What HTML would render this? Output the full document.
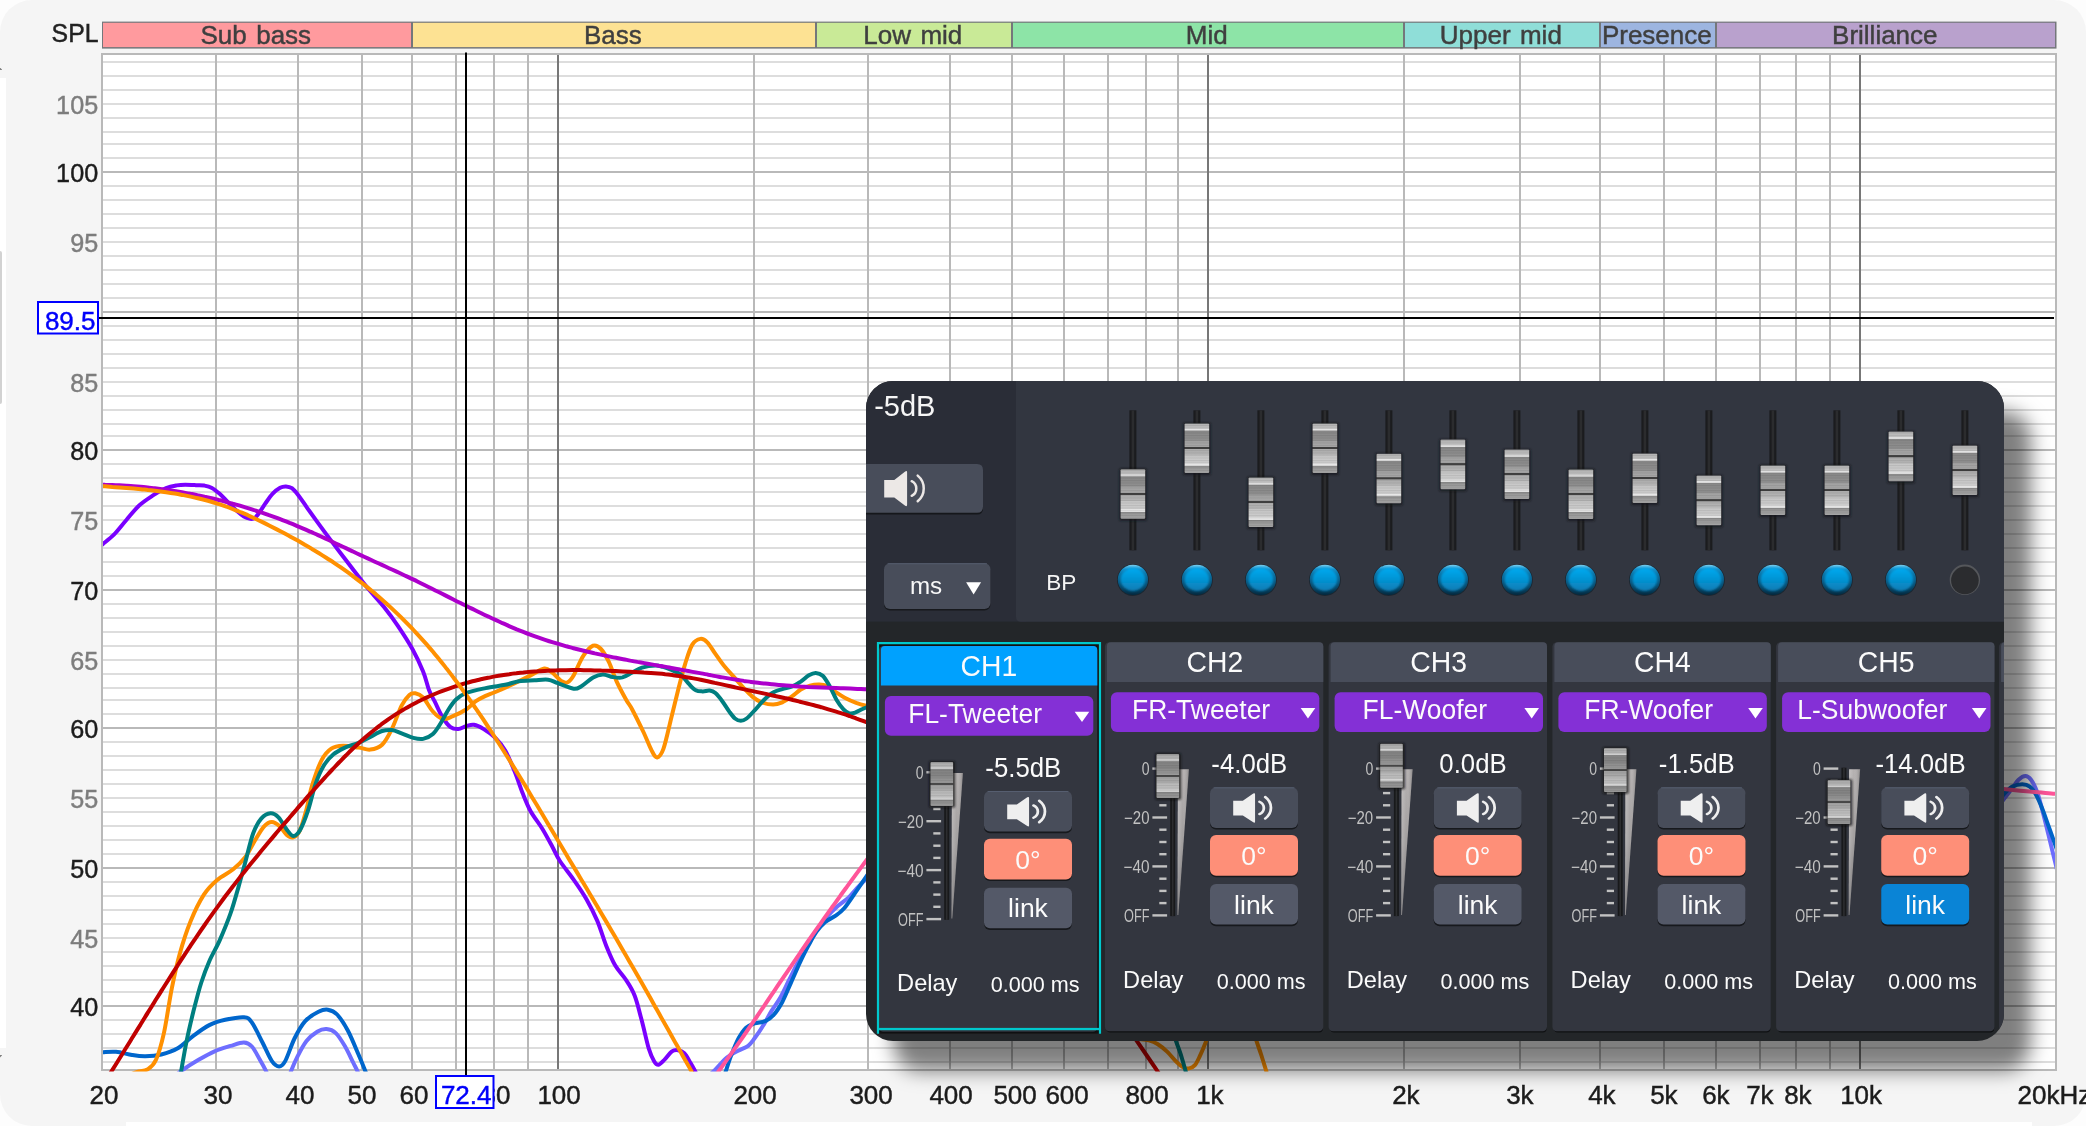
<!DOCTYPE html>
<html><head><meta charset="utf-8"><title>SPL graph</title>
<style>
html,body{margin:0;padding:0}
body{width:2086px;height:1126px;overflow:hidden;position:relative;background:#fdfdfd;font-family:"Liberation Sans", sans-serif}
#win{position:absolute;left:0;top:0;width:2086px;height:1126px;background:#f5f5f5;border-radius:32px 32px 32px 32px}
.wstrip{position:absolute;background:#fff}
</style></head><body>
<div id="win"></div>
<div class="wstrip" style="left:126px;top:1122px;width:1906px;height:4px"></div>
<div class="wstrip" style="left:0;top:78px;width:6px;height:970px"></div>
<div style="position:absolute;left:0;top:251px;width:2px;height:153px;background:#d2d2d2;border-radius:0 2px 2px 0"></div>
<div style="position:absolute;left:0;top:67.5px;width:2.4px;height:2.6px;background:#808080;clip-path:polygon(0 0,100% 100%,0 100%)"></div>
<div style="position:absolute;left:0;top:1055px;width:2.4px;height:2.6px;background:#808080;clip-path:polygon(0 0,100% 0,0 100%)"></div>
<svg id="chart" width="2086" height="1126" viewBox="0 0 2086 1126" style="position:absolute;left:0;top:0;will-change:transform" font-family='"Liberation Sans", sans-serif' font-size="26">
<defs><clipPath id="pc"><rect x="103" y="55" width="1952" height="1016.5"/></clipPath></defs>
<rect x="102" y="54" width="1954" height="1016" fill="#fff"/>
<g fill="#dddddd"><rect x="102" y="1061" width="1954" height="2"/><rect x="102" y="1047" width="1954" height="2"/><rect x="102" y="1033" width="1954" height="2"/><rect x="102" y="1019" width="1954" height="2"/><rect x="102" y="991" width="1954" height="2"/><rect x="102" y="979" width="1954" height="2"/><rect x="102" y="965" width="1954" height="2"/><rect x="102" y="951" width="1954" height="2"/><rect x="102" y="937" width="1954" height="2"/><rect x="102" y="923" width="1954" height="2"/><rect x="102" y="909" width="1954" height="2"/><rect x="102" y="895" width="1954" height="2"/><rect x="102" y="881" width="1954" height="2"/><rect x="102" y="853" width="1954" height="2"/><rect x="102" y="839" width="1954" height="2"/><rect x="102" y="825" width="1954" height="2"/><rect x="102" y="811" width="1954" height="2"/><rect x="102" y="797" width="1954" height="2"/><rect x="102" y="783" width="1954" height="2"/><rect x="102" y="769" width="1954" height="2"/><rect x="102" y="755" width="1954" height="2"/><rect x="102" y="741" width="1954" height="2"/><rect x="102" y="713" width="1954" height="2"/><rect x="102" y="699" width="1954" height="2"/><rect x="102" y="687" width="1954" height="2"/><rect x="102" y="673" width="1954" height="2"/><rect x="102" y="659" width="1954" height="2"/><rect x="102" y="645" width="1954" height="2"/><rect x="102" y="631" width="1954" height="2"/><rect x="102" y="617" width="1954" height="2"/><rect x="102" y="603" width="1954" height="2"/><rect x="102" y="575" width="1954" height="2"/><rect x="102" y="561" width="1954" height="2"/><rect x="102" y="547" width="1954" height="2"/><rect x="102" y="533" width="1954" height="2"/><rect x="102" y="519" width="1954" height="2"/><rect x="102" y="505" width="1954" height="2"/><rect x="102" y="491" width="1954" height="2"/><rect x="102" y="477" width="1954" height="2"/><rect x="102" y="463" width="1954" height="2"/><rect x="102" y="435" width="1954" height="2"/><rect x="102" y="423" width="1954" height="2"/><rect x="102" y="409" width="1954" height="2"/><rect x="102" y="395" width="1954" height="2"/><rect x="102" y="381" width="1954" height="2"/><rect x="102" y="367" width="1954" height="2"/><rect x="102" y="353" width="1954" height="2"/><rect x="102" y="339" width="1954" height="2"/><rect x="102" y="325" width="1954" height="2"/><rect x="102" y="297" width="1954" height="2"/><rect x="102" y="283" width="1954" height="2"/><rect x="102" y="269" width="1954" height="2"/><rect x="102" y="255" width="1954" height="2"/><rect x="102" y="241" width="1954" height="2"/><rect x="102" y="227" width="1954" height="2"/><rect x="102" y="213" width="1954" height="2"/><rect x="102" y="199" width="1954" height="2"/><rect x="102" y="185" width="1954" height="2"/><rect x="102" y="157" width="1954" height="2"/><rect x="102" y="143" width="1954" height="2"/><rect x="102" y="131" width="1954" height="2"/><rect x="102" y="117" width="1954" height="2"/><rect x="102" y="103" width="1954" height="2"/><rect x="102" y="89" width="1954" height="2"/><rect x="102" y="75" width="1954" height="2"/><rect x="102" y="61" width="1954" height="2"/></g>
<g fill="#b9b9b9"><rect x="102" y="1005" width="1954" height="2"/><rect x="102" y="867" width="1954" height="2"/><rect x="102" y="727" width="1954" height="2"/><rect x="102" y="589" width="1954" height="2"/><rect x="102" y="449" width="1954" height="2"/><rect x="102" y="311" width="1954" height="2"/><rect x="102" y="171" width="1954" height="2"/></g>
<g fill="#b9b9b9"><rect x="215" y="54" width="2" height="1016"/><rect x="297" y="54" width="2" height="1016"/><rect x="361" y="54" width="2" height="1016"/><rect x="411" y="54" width="2" height="1016"/><rect x="455" y="54" width="2" height="1016"/><rect x="493" y="54" width="2" height="1016"/><rect x="527" y="54" width="2" height="1016"/><rect x="753" y="54" width="2" height="1016"/><rect x="867" y="54" width="2" height="1016"/><rect x="949" y="54" width="2" height="1016"/><rect x="1011" y="54" width="2" height="1016"/><rect x="1063" y="54" width="2" height="1016"/><rect x="1107" y="54" width="2" height="1016"/><rect x="1145" y="54" width="2" height="1016"/><rect x="1177" y="54" width="2" height="1016"/><rect x="1403" y="54" width="2" height="1016"/><rect x="1519" y="54" width="2" height="1016"/><rect x="1599" y="54" width="2" height="1016"/><rect x="1663" y="54" width="2" height="1016"/><rect x="1715" y="54" width="2" height="1016"/><rect x="1759" y="54" width="2" height="1016"/><rect x="1795" y="54" width="2" height="1016"/><rect x="1829" y="54" width="2" height="1016"/></g>
<g fill="#777777"><rect x="557" y="54" width="2" height="1016"/><rect x="1207" y="54" width="2" height="1016"/><rect x="1859" y="54" width="2" height="1016"/></g>
<rect x="102" y="54" width="1954" height="1016" fill="none" stroke="#b9b9b9" stroke-width="2"/>
<g clip-path="url(#pc)" fill="none" stroke-width="4" stroke-linejoin="round" stroke-linecap="butt">
<path d="M170.0,1080.0C172.1,1078.3 177.8,1073.4 182.6,1070.0C187.4,1066.6 193.3,1062.9 198.6,1059.8C203.9,1056.7 209.3,1053.6 214.6,1051.3C219.9,1049.0 225.7,1047.4 230.6,1045.9C235.5,1044.4 240.3,1042.4 243.9,1042.5C247.5,1042.6 249.2,1043.6 251.9,1046.5C254.6,1049.4 257.6,1055.8 259.9,1059.8C262.2,1063.8 264.0,1067.0 265.7,1070.4C267.4,1073.8 269.3,1078.4 270.0,1080.0" stroke="#6e6eff"/>
<path d="M288.0,1080.0C288.6,1078.4 289.8,1074.2 291.3,1070.4C292.8,1066.6 294.7,1062.0 297.2,1057.1C299.7,1052.2 303.2,1045.3 306.5,1041.1C309.8,1036.9 313.9,1033.8 317.2,1031.8C320.5,1029.8 323.4,1028.9 326.5,1029.1C329.6,1029.3 332.7,1030.2 335.8,1033.1C338.9,1036.0 342.2,1041.6 345.1,1046.5C348.0,1051.4 351.1,1058.4 353.1,1062.4C355.1,1066.4 355.8,1067.5 357.1,1070.4C358.4,1073.3 360.4,1078.4 361.0,1080.0" stroke="#6e6eff"/>
<path d="M704.0,1080.0C705.7,1078.4 710.5,1074.3 714.3,1070.6C718.1,1066.8 723.0,1060.8 726.9,1057.5C730.8,1054.2 734.0,1053.0 737.6,1051.1C741.2,1049.1 745.4,1047.9 748.2,1045.8C751.0,1043.7 752.1,1041.7 754.6,1038.3C757.1,1034.9 760.4,1030.1 763.2,1025.5C766.1,1020.9 768.9,1015.2 771.7,1010.6C774.5,1006.0 777.4,1002.8 780.2,997.8C783.0,992.8 785.9,986.4 788.7,980.7C791.6,975.0 794.1,969.7 797.3,963.7C800.5,957.7 804.7,950.0 807.9,944.5C811.1,939.0 813.3,935.2 816.5,930.6C819.7,926.0 823.6,920.9 827.1,916.8C830.6,912.7 834.2,909.3 837.8,906.1C841.3,902.9 845.2,900.6 848.4,897.6C851.6,894.6 854.0,891.2 857.0,888.0C860.0,884.8 862.8,882.2 866.6,878.4C870.4,874.6 877.8,867.2 880.0,865.0" stroke="#6e6eff"/>
<path d="M1990.0,818.0C1992.3,814.9 2000.4,803.8 2003.9,799.1C2007.4,794.4 2008.6,793.0 2011.1,789.8C2013.5,786.6 2016.2,782.1 2018.6,779.8C2021.0,777.5 2023.3,776.1 2025.4,776.1C2027.5,776.1 2029.0,777.1 2031.0,779.8C2033.0,782.5 2035.3,787.2 2037.2,792.2C2039.1,797.2 2040.3,802.7 2042.2,809.7C2044.1,816.8 2046.4,826.5 2048.4,834.5C2050.4,842.5 2052.2,850.2 2054.0,857.5C2055.8,864.8 2058.2,874.6 2059.0,878.0" stroke="#6e6eff"/>
<path d="M96.0,1052.8C97.1,1052.7 99.4,1052.5 102.7,1052.3C106.0,1052.1 111.1,1051.3 116.0,1051.8C120.9,1052.2 127.1,1054.2 132.0,1055.0C136.9,1055.8 140.4,1056.4 145.3,1056.3C150.2,1056.2 156.0,1055.8 161.3,1054.5C166.6,1053.2 172.0,1051.7 177.3,1048.6C182.6,1045.5 188.0,1039.7 193.3,1035.8C198.6,1031.9 204.0,1027.8 209.3,1025.1C214.6,1022.4 219.4,1021.1 225.2,1019.8C231.0,1018.5 239.4,1016.8 243.9,1017.2C248.4,1017.7 248.8,1018.3 251.9,1022.5C255.0,1026.7 259.2,1036.1 262.5,1042.5C265.8,1048.9 269.1,1057.1 271.9,1061.1C274.7,1065.1 276.9,1066.4 279.1,1066.4C281.3,1066.4 282.6,1065.8 285.2,1061.1C287.8,1056.4 291.2,1045.2 294.5,1038.5C297.8,1031.8 301.2,1025.5 305.2,1021.1C309.2,1016.6 314.7,1013.7 318.5,1011.8C322.3,1009.9 324.7,1009.2 327.8,1009.7C330.9,1010.2 333.8,1011.0 337.1,1014.5C340.4,1018.0 344.2,1023.8 347.8,1030.5C351.4,1037.2 355.6,1047.8 358.5,1054.5C361.4,1061.2 363.4,1066.2 365.1,1070.4C366.9,1074.7 368.4,1078.4 369.0,1080.0" stroke="#0066cc"/>
<path d="M723.0,1080.0C723.5,1078.4 724.6,1074.7 726.0,1070.6C727.4,1066.5 729.1,1060.8 731.2,1055.4C733.3,1050.0 736.1,1042.9 738.6,1038.3C741.1,1033.7 743.4,1030.1 746.1,1027.6C748.8,1025.1 751.4,1024.5 754.6,1023.4C757.8,1022.3 762.1,1022.6 765.3,1021.2C768.5,1019.8 771.0,1018.0 773.8,1014.8C776.6,1011.6 779.4,1007.3 782.3,1002.0C785.1,996.7 788.0,989.3 790.9,982.9C793.8,976.5 796.6,969.8 799.4,963.7C802.2,957.7 805.0,951.9 807.9,946.6C810.8,941.3 813.6,935.8 816.5,931.7C819.4,927.6 821.8,924.8 825.0,922.1C828.2,919.4 832.5,918.0 835.7,915.7C838.9,913.4 841.0,911.9 844.2,908.2C847.4,904.5 851.1,898.6 854.8,893.3C858.5,888.0 862.4,882.2 866.6,876.2C870.8,870.2 877.8,860.2 880.0,857.0" stroke="#0066cc"/>
<path d="M1990.0,812.0C1992.3,809.0 2000.2,798.3 2003.9,794.1C2007.6,789.9 2009.2,788.2 2012.3,786.6C2015.4,785.0 2019.4,784.2 2022.3,784.2C2025.2,784.2 2027.5,784.9 2029.8,786.6C2032.1,788.4 2033.9,791.1 2036.0,794.7C2038.1,798.3 2040.1,803.2 2042.2,808.4C2044.3,813.6 2046.3,820.0 2048.4,825.8C2050.5,831.6 2052.7,837.8 2054.6,843.2C2056.5,848.6 2059.1,855.5 2060.0,858.0" stroke="#0066cc"/>
<path d="M100.0,546.5C100.5,546.1 100.4,546.2 102.7,544.2C105.0,542.2 109.9,538.7 113.9,534.6C117.9,530.5 122.3,524.6 126.6,519.7C130.8,514.8 134.9,509.4 139.4,505.3C143.9,501.2 148.9,498.1 153.3,495.2C157.8,492.3 162.2,489.8 166.1,488.2C170.0,486.6 173.5,486.0 176.7,485.4C179.9,484.8 182.1,484.7 185.3,484.7C188.5,484.7 192.7,485.0 195.9,485.2C199.1,485.4 201.8,485.2 204.5,485.6C207.2,486.1 209.4,486.6 211.9,487.9C214.4,489.2 216.7,491.2 219.4,493.6C222.1,496.0 225.1,499.3 227.9,502.1C230.7,504.9 233.7,508.2 236.4,510.6C239.1,513.0 241.6,515.1 243.9,516.5C246.2,517.9 248.5,518.5 250.3,518.8C252.1,519.1 253.2,519.0 254.6,518.1C256.0,517.2 257.0,515.7 258.8,513.3C260.6,510.9 262.9,507.0 265.2,503.7C267.5,500.4 270.2,496.3 272.7,493.6C275.2,490.9 277.9,488.9 280.1,487.7C282.3,486.5 284.0,486.3 286.0,486.4C288.0,486.5 289.8,486.7 291.9,488.2C293.9,489.7 295.8,492.0 298.3,495.2C300.8,498.4 303.9,503.2 306.8,507.3C309.7,511.4 311.4,513.8 315.6,519.6C319.8,525.4 326.6,534.7 332.2,542.1C337.8,549.5 343.2,556.6 348.9,564.0C354.6,571.4 360.5,579.3 366.4,586.5C372.2,593.7 378.8,600.5 384.0,607.0C389.2,613.5 393.0,618.6 397.7,625.6C402.4,632.6 408.2,641.4 412.4,649.0C416.6,656.6 420.3,664.7 423.1,671.5C425.9,678.3 427.1,685.0 429.0,690.0C430.9,695.0 432.5,697.1 434.8,701.7C437.1,706.3 440.0,713.2 442.6,717.4C445.2,721.6 447.9,725.1 450.5,727.1C453.1,729.1 455.7,729.2 458.3,729.1C460.9,729.0 463.5,726.9 466.1,726.2C468.7,725.5 471.0,724.3 473.9,724.8C476.8,725.3 480.1,726.9 483.7,729.1C487.3,731.3 491.8,734.3 495.4,737.9C499.0,741.5 501.9,744.9 505.2,750.6C508.4,756.3 512.0,764.9 514.9,772.1C517.8,779.3 520.2,787.1 522.8,793.6C525.4,800.1 527.4,805.4 530.6,811.2C533.9,817.1 538.7,822.9 542.3,828.7C545.9,834.6 549.2,840.9 552.1,846.3C555.0,851.7 556.3,855.5 559.9,861.0C563.5,866.5 569.1,873.2 573.6,879.6C578.1,886.0 582.7,892.6 586.6,899.5C590.5,906.4 594.0,913.2 597.3,920.9C600.6,928.6 603.2,938.3 606.2,945.7C609.2,953.1 611.9,959.7 615.1,965.3C618.4,970.9 622.5,974.5 625.7,979.5C629.0,984.5 631.9,988.7 634.6,995.5C637.3,1002.3 639.3,1011.4 641.7,1020.3C644.1,1029.2 646.7,1041.9 648.8,1048.7C650.9,1055.5 652.5,1058.5 654.1,1061.2C655.7,1063.9 656.8,1065.0 658.6,1064.7C660.4,1064.4 662.6,1061.6 664.8,1059.4C667.0,1057.2 669.7,1052.9 671.9,1051.4C674.1,1049.9 676.0,1049.9 678.1,1050.2C680.2,1050.5 682.2,1051.1 684.3,1053.2C686.4,1055.3 688.8,1060.0 690.6,1063.0C692.4,1066.0 693.6,1068.2 695.0,1070.9C696.4,1073.6 698.3,1077.7 699.0,1079.0" stroke="#7a00ff"/>
<path d="M132.0,1074.0C132.9,1073.6 134.6,1072.6 137.3,1071.8C140.0,1071.0 144.9,1071.1 148.0,1069.1C151.1,1067.1 153.3,1065.8 156.0,1059.8C158.7,1053.8 161.2,1045.1 163.9,1033.1C166.6,1021.1 169.2,1001.1 171.9,987.8C174.6,974.5 176.8,964.3 179.9,953.2C183.0,942.1 186.6,931.0 190.6,921.2C194.6,911.4 199.5,901.5 203.9,894.6C208.3,887.7 212.3,884.1 217.2,879.9C222.1,875.7 228.5,873.1 233.2,869.3C237.9,865.5 241.6,862.0 245.2,857.3C248.8,852.6 251.4,846.4 254.5,841.3C257.6,836.2 261.0,829.8 263.9,826.6C266.8,823.4 269.2,822.1 271.9,822.1C274.6,822.1 277.5,824.5 279.9,826.6C282.3,828.7 284.3,832.8 286.5,834.6C288.7,836.4 291.0,838.0 293.2,837.3C295.4,836.6 297.6,835.3 299.8,830.6C302.0,825.9 304.5,816.6 306.5,809.3C308.5,802.0 309.2,795.0 311.7,786.8C314.2,778.6 318.2,766.7 321.5,760.3C324.8,753.9 327.7,751.0 331.3,748.6C334.9,746.2 338.4,745.9 343.0,745.7C347.6,745.5 354.1,747.0 358.6,747.6C363.2,748.2 366.4,750.1 370.3,749.6C374.2,749.1 378.5,748.1 382.1,744.7C385.7,741.3 388.6,735.6 391.8,729.1C395.1,722.6 398.7,711.3 401.6,705.6C404.5,699.9 407.1,697.0 409.4,694.9C411.7,692.8 413.0,692.9 415.3,693.3C417.6,693.7 420.2,694.5 423.1,697.5C426.0,700.5 429.6,707.9 432.9,711.5C436.1,715.1 439.4,718.1 442.6,718.9C445.9,719.7 448.5,718.0 452.4,716.4C456.3,714.8 462.2,712.0 466.1,709.5C470.0,707.0 472.6,703.5 475.9,701.2C479.1,698.9 482.4,697.4 485.6,695.9C488.9,694.4 490.5,694.1 495.4,692.0C500.3,689.9 509.0,686.0 514.9,683.2C520.8,680.4 525.7,677.8 530.6,675.4C535.5,673.0 540.7,669.1 544.3,668.6C547.9,668.1 549.2,670.4 552.1,672.5C555.0,674.6 559.2,679.7 561.8,681.3C564.4,682.9 565.7,683.2 567.7,682.2C569.7,681.2 571.0,679.8 573.6,675.4C576.2,671.0 580.0,660.8 583.3,655.9C586.5,651.0 590.2,646.9 593.1,645.7C596.0,644.6 598.3,646.3 600.9,649.0C603.5,651.7 606.1,656.3 608.7,661.7C611.3,667.1 613.7,674.9 616.6,681.3C619.5,687.7 623.7,695.3 626.3,700.0C628.9,704.7 629.3,704.0 632.2,709.5C635.1,715.0 640.6,726.1 643.9,733.0C647.1,739.9 649.5,746.5 651.7,750.6C653.9,754.7 655.2,757.7 657.2,757.4C659.2,757.1 661.1,755.3 663.5,748.6C665.9,741.9 669.0,727.0 671.5,717.0C674.0,707.0 676.2,697.5 678.5,688.5C680.8,679.5 683.1,670.4 685.4,663.1C687.7,655.8 689.8,648.6 692.3,644.6C694.8,640.6 697.9,639.3 700.4,638.9C702.9,638.5 704.8,639.8 707.3,642.3C709.8,644.8 712.5,649.8 715.4,653.9C718.3,658.0 721.5,662.8 724.6,666.6C727.7,670.4 730.8,673.5 733.9,676.9C737.0,680.3 740.0,684.0 743.1,687.3C746.2,690.6 749.2,694.1 752.3,696.6C755.4,699.1 758.1,701.0 761.6,702.3C765.1,703.6 769.7,704.6 773.1,704.6C776.5,704.6 779.2,703.6 782.3,702.3C785.4,701.0 788.5,698.7 791.6,696.6C794.7,694.5 797.7,691.4 800.8,689.6C803.9,687.8 806.9,686.5 810.0,685.6C813.1,684.7 816.4,684.3 819.3,684.4C822.2,684.5 824.7,685.0 827.4,686.2C830.1,687.5 832.5,690.0 835.4,691.9C838.3,693.8 841.2,695.9 844.7,697.7C848.2,699.5 852.7,701.5 856.2,702.9C859.8,704.2 862.0,704.8 866.0,705.8C870.0,706.8 877.7,708.5 880.0,709.0" stroke="#ff9000"/>
<path d="M1140.0,1039.0C1141.5,1039.2 1146.0,1039.6 1148.9,1040.4C1151.8,1041.2 1154.5,1042.1 1157.5,1044.0C1160.5,1045.9 1163.9,1048.6 1167.1,1051.6C1170.3,1054.6 1174.0,1059.5 1176.7,1062.2C1179.4,1064.9 1181.3,1066.5 1183.4,1067.5C1185.5,1068.5 1187.3,1068.8 1189.2,1068.4C1191.1,1068.0 1193.2,1067.1 1194.9,1065.1C1196.7,1063.1 1198.3,1059.3 1199.7,1056.4C1201.1,1053.5 1202.4,1050.5 1203.5,1047.8C1204.6,1045.1 1205.3,1043.4 1206.4,1040.4C1207.5,1037.4 1209.4,1031.7 1210.0,1030.0" stroke="#ff9000"/>
<path d="M1252.0,1027.0C1252.7,1029.2 1254.8,1035.8 1256.3,1040.4C1257.8,1045.0 1259.5,1049.6 1261.1,1054.5C1262.7,1059.4 1264.6,1065.7 1265.9,1069.9C1267.2,1074.2 1268.5,1078.3 1269.0,1080.0" stroke="#ff9000"/>
<path d="M179.5,1082.0C179.8,1080.1 180.1,1077.2 181.3,1070.4C182.5,1063.6 184.6,1050.9 186.6,1041.1C188.6,1031.3 190.9,1021.6 193.3,1011.8C195.8,1002.0 198.6,990.9 201.3,982.5C204.0,974.1 206.2,968.3 209.3,961.2C212.4,954.1 216.4,947.9 219.9,939.9C223.4,931.9 227.5,922.1 230.6,913.2C233.7,904.3 236.2,895.0 238.6,886.6C241.0,878.2 242.8,871.5 245.2,862.6C247.6,853.7 250.5,840.6 253.2,833.3C255.9,826.0 258.3,821.9 261.2,818.6C264.1,815.3 267.6,813.5 270.5,813.3C273.4,813.1 275.8,814.6 278.5,817.3C281.2,820.0 284.1,826.2 286.5,829.3C288.9,832.4 291.0,835.8 293.2,836.0C295.4,836.2 297.4,834.7 299.8,830.6C302.2,826.5 305.2,819.0 307.8,811.2C310.4,803.4 313.0,791.3 315.6,783.8C318.2,776.3 320.5,771.1 323.4,766.2C326.3,761.3 329.6,757.6 333.2,754.5C336.8,751.4 340.7,749.6 344.9,747.6C349.1,745.6 354.4,744.6 358.6,742.8C362.8,741.0 366.4,738.9 370.3,736.9C374.2,734.9 378.5,732.1 382.1,731.0C385.7,729.9 388.6,729.7 391.8,730.1C395.1,730.5 398.0,732.1 401.6,733.4C405.2,734.7 409.7,737.0 413.3,737.9C416.9,738.8 419.8,739.5 423.1,738.9C426.4,738.2 430.0,736.6 432.9,734.0C435.8,731.4 438.1,727.3 440.7,723.2C443.3,719.1 445.9,713.5 448.5,709.5C451.1,705.5 453.4,702.0 456.3,699.3C459.2,696.5 461.2,694.9 466.1,693.0C471.0,691.1 479.1,689.5 485.6,688.1C492.1,686.7 499.6,685.9 505.2,684.8C510.8,683.7 514.0,682.0 518.9,681.3C523.8,680.5 529.6,680.6 534.5,680.3C539.4,680.0 544.3,679.2 548.2,679.7C552.1,680.2 553.7,681.7 557.9,683.2C562.1,684.7 569.7,688.2 573.6,688.7C577.5,689.2 578.1,688.1 581.4,686.2C584.6,684.3 589.5,679.4 593.1,677.4C596.7,675.4 599.6,674.5 602.9,674.4C606.2,674.3 609.5,676.5 612.7,677.0C616.0,677.5 619.1,678.1 622.4,677.4C625.6,676.6 628.9,674.1 632.2,672.5C635.5,670.9 638.1,668.8 642.0,667.6C645.9,666.5 652.1,665.7 655.6,665.6C659.1,665.5 660.4,666.2 663.0,666.9C665.6,667.6 668.5,668.7 671.5,670.0C674.5,671.3 677.9,672.3 680.8,674.6C683.7,676.9 686.4,681.3 688.9,683.9C691.4,686.5 693.5,689.0 695.8,690.2C698.1,691.5 700.4,691.3 702.7,691.4C705.0,691.5 707.5,690.3 709.6,690.6C711.7,690.9 713.3,691.3 715.4,693.1C717.5,694.9 720.0,698.1 722.3,701.2C724.6,704.3 727.2,708.7 729.3,711.6C731.4,714.5 733.1,717.0 735.0,718.5C736.9,720.0 738.9,720.8 740.8,720.8C742.7,720.8 744.3,720.2 746.6,718.5C748.9,716.8 751.7,713.5 754.6,710.4C757.5,707.3 760.8,703.0 763.9,700.0C767.0,697.0 770.0,694.3 773.1,692.5C776.2,690.7 779.0,690.1 782.3,689.1C785.6,688.1 789.6,687.5 792.7,686.2C795.8,685.0 798.1,683.4 800.8,681.6C803.5,679.8 806.4,676.7 808.9,675.2C811.4,673.8 813.5,672.8 815.8,672.9C818.1,673.0 820.4,673.6 822.7,675.8C825.0,678.0 827.4,682.2 829.7,686.2C832.0,690.2 834.3,696.1 836.6,700.0C838.9,703.9 841.4,707.1 843.5,709.3C845.6,711.5 847.4,712.7 849.3,713.3C851.2,713.9 853.2,713.3 855.1,712.7C857.0,712.1 859.0,710.7 860.8,709.8C862.6,708.9 862.8,708.8 866.0,707.5C869.2,706.2 877.7,702.9 880.0,702.0" stroke="#007f80"/>
<path d="M1171.0,1027.0C1171.8,1029.2 1174.1,1036.0 1175.7,1040.4C1177.3,1044.8 1178.9,1048.7 1180.5,1053.6C1182.1,1058.5 1184.0,1065.5 1185.3,1069.9C1186.5,1074.3 1187.5,1078.3 1188.0,1080.0" stroke="#007f80"/>
<path d="M105.0,1081.8C106.2,1079.9 109.7,1074.2 112.1,1070.4C114.5,1066.6 116.8,1062.8 119.2,1059.0C121.5,1055.2 123.9,1051.4 126.3,1047.5C128.6,1043.7 131.0,1039.9 133.4,1036.0C135.7,1032.2 138.1,1028.4 140.5,1024.6C142.8,1020.7 145.2,1016.9 147.5,1013.1C149.9,1009.3 152.3,1005.5 154.6,1001.7C157.0,997.9 159.4,994.2 161.7,990.4C164.1,986.6 166.5,982.9 168.8,979.2C171.2,975.5 173.5,971.8 175.9,968.1C178.3,964.4 180.6,960.8 183.0,957.2C185.4,953.5 187.7,950.0 190.1,946.4C192.5,942.8 194.8,939.3 197.2,935.8C199.5,932.4 201.9,928.9 204.3,925.5C206.6,922.1 209.0,918.7 211.4,915.4C213.7,912.1 216.1,908.8 218.5,905.6C220.8,902.4 223.2,899.2 225.5,896.0C227.9,892.9 230.3,889.8 232.6,886.7C235.0,883.7 237.4,880.6 239.7,877.6C242.1,874.6 244.5,871.7 246.8,868.7C249.2,865.8 251.5,862.9 253.9,860.0C256.3,857.1 258.6,854.2 261.0,851.3C263.4,848.5 265.7,845.7 268.1,842.8C270.5,840.0 272.8,837.2 275.2,834.4C277.5,831.6 279.9,828.8 282.3,826.0C284.6,823.3 287.0,820.5 289.4,817.8C291.7,815.0 294.1,812.3 296.5,809.6C298.8,806.8 301.2,804.1 303.5,801.5C305.9,798.8 308.3,796.1 310.6,793.4C313.0,790.8 315.4,788.1 317.7,785.5C320.1,782.9 322.5,780.3 324.8,777.7C327.2,775.1 329.5,772.5 331.9,770.0C334.3,767.5 336.6,765.0 339.0,762.5C341.4,760.1 343.7,757.6 346.1,755.3C348.5,752.9 350.8,750.6 353.2,748.3C355.5,746.1 357.9,743.9 360.3,741.7C362.6,739.6 365.0,737.5 367.4,735.5C369.7,733.5 372.1,731.6 374.5,729.7C376.8,727.8 379.2,726.0 381.5,724.2C383.9,722.5 386.3,720.8 388.6,719.1C391.0,717.5 393.4,715.9 395.7,714.4C398.1,712.9 400.5,711.4 402.8,710.0C405.2,708.6 407.5,707.2 409.9,705.9C412.3,704.6 414.6,703.4 417.0,702.2C419.4,701.0 421.7,699.8 424.1,698.7C426.5,697.6 428.8,696.5 431.2,695.5C433.5,694.5 435.9,693.5 438.3,692.5C440.6,691.6 443.0,690.7 445.4,689.8C447.7,688.9 450.1,688.1 452.5,687.3C454.8,686.5 457.2,685.8 459.5,685.0C461.9,684.3 464.3,683.6 466.6,682.9C469.0,682.3 471.4,681.6 473.7,681.0C476.1,680.4 478.5,679.9 480.8,679.3C483.2,678.8 485.5,678.3 487.9,677.8C490.3,677.3 492.6,676.9 495.0,676.4C497.4,676.0 499.7,675.6 502.1,675.2C504.5,674.9 506.8,674.5 509.2,674.2C511.5,673.8 513.9,673.5 516.3,673.3C518.6,673.0 521.0,672.7 523.4,672.5C525.7,672.2 528.1,672.0 530.5,671.8C532.8,671.6 535.2,671.4 537.5,671.3C539.9,671.1 542.3,671.0 544.6,670.9C547.0,670.7 549.4,670.6 551.7,670.5C554.1,670.4 556.5,670.4 558.8,670.3C561.2,670.2 563.5,670.2 565.9,670.2C568.3,670.1 570.6,670.1 573.0,670.1C575.4,670.1 577.7,670.1 580.1,670.1C582.5,670.1 584.8,670.2 587.2,670.2C589.5,670.3 591.9,670.3 594.3,670.4C596.6,670.4 599.0,670.5 601.4,670.6C603.7,670.6 606.1,670.7 608.5,670.8C610.8,670.9 613.2,671.0 615.5,671.1C617.9,671.2 620.3,671.3 622.6,671.4C625.0,671.5 627.4,671.6 629.7,671.7C632.1,671.8 634.5,671.9 636.8,672.1C639.2,672.2 641.5,672.3 643.9,672.5C646.3,672.6 648.6,672.8 651.0,673.0C653.4,673.2 655.7,673.4 658.1,673.6C660.5,673.8 662.8,674.0 665.2,674.3C667.5,674.5 669.9,674.8 672.3,675.1C674.6,675.4 677.0,675.7 679.4,676.1C681.7,676.4 684.1,676.8 686.5,677.2C688.8,677.6 691.2,678.0 693.5,678.4C695.9,678.9 698.3,679.4 700.6,679.8C703.0,680.3 705.4,680.8 707.7,681.3C710.1,681.8 712.5,682.3 714.8,682.9C717.2,683.4 719.5,683.9 721.9,684.4C724.3,685.0 726.6,685.5 729.0,686.0C731.4,686.5 733.7,687.1 736.1,687.6C738.5,688.1 740.8,688.6 743.2,689.1C745.5,689.6 747.9,690.1 750.3,690.6C752.6,691.1 755.0,691.6 757.4,692.1C759.7,692.6 762.1,693.1 764.5,693.6C766.8,694.1 769.2,694.7 771.5,695.2C773.9,695.7 776.3,696.2 778.6,696.7C781.0,697.3 783.4,697.8 785.7,698.3C788.1,698.9 790.5,699.4 792.8,700.0C795.2,700.5 797.5,701.1 799.9,701.7C802.3,702.3 804.6,702.9 807.0,703.5C809.4,704.1 811.7,704.7 814.1,705.3C816.5,705.9 818.8,706.6 821.2,707.2C823.5,707.9 825.9,708.6 828.3,709.3C830.6,710.0 833.0,710.7 835.4,711.4C837.7,712.1 840.1,712.9 842.5,713.7C844.8,714.4 847.2,715.2 849.5,716.0C851.9,716.9 854.3,717.7 856.6,718.6C859.0,719.4 861.4,720.3 863.7,721.2C866.1,722.1 868.5,723.1 870.8,724.1C873.2,725.0 875.5,726.0 877.9,727.0C880.3,728.1 883.8,729.7 885.0,730.2" stroke="#c00000"/>
<path d="M1128.0,1028.0C1129.4,1030.1 1131.6,1033.4 1136.4,1040.4C1141.2,1047.4 1152.0,1063.1 1156.6,1069.9C1161.2,1076.7 1162.8,1079.2 1164.0,1081.0" stroke="#c00000"/>
<path d="M711.0,1081.7C712.3,1079.9 716.0,1074.8 718.6,1071.3C721.1,1067.9 723.6,1064.3 726.1,1060.8C728.7,1057.3 731.2,1053.7 733.7,1050.1C736.2,1046.5 738.7,1042.9 741.3,1039.3C743.8,1035.7 746.3,1032.0 748.8,1028.3C751.3,1024.6 753.9,1021.0 756.4,1017.3C758.9,1013.6 761.4,1009.8 764.0,1006.1C766.5,1002.4 769.0,998.7 771.5,994.9C774.0,991.2 776.6,987.5 779.1,983.7C781.6,980.0 784.1,976.3 786.7,972.6C789.2,968.9 791.7,965.2 794.2,961.5C796.7,957.8 799.3,954.1 801.8,950.5C804.3,946.8 806.8,943.1 809.3,939.5C811.9,935.9 814.4,932.3 816.9,928.7C819.4,925.1 822.0,921.5 824.5,917.9C827.0,914.4 829.5,910.8 832.0,907.3C834.6,903.8 837.1,900.3 839.6,896.8C842.1,893.3 844.7,889.8 847.2,886.4C849.7,882.9 852.2,879.5 854.7,876.1C857.3,872.7 859.8,869.3 862.3,865.9C864.8,862.5 867.3,859.2 869.9,855.8C872.4,852.5 874.9,849.2 877.4,845.9C880.0,842.6 883.7,837.7 885.0,836.0" stroke="#ff5599"/>
<path d="M1985.0,787.2C1988.2,787.5 1996.4,788.4 2003.9,789.1C2011.4,789.8 2021.3,790.8 2029.8,791.6C2038.2,792.4 2049.2,793.2 2054.6,793.7C2060.0,794.2 2060.8,794.2 2062.0,794.3" stroke="#ff5599"/>
<path d="M98.0,484.7C99.2,484.7 102.7,484.7 105.1,484.8C107.5,484.8 109.8,484.9 112.2,485.0C114.6,485.1 116.9,485.2 119.3,485.3C121.7,485.4 124.0,485.6 126.4,485.7C128.8,485.9 131.1,486.1 133.5,486.2C135.9,486.4 138.2,486.6 140.6,486.8C142.9,487.1 145.3,487.3 147.7,487.5C150.0,487.8 152.4,488.0 154.8,488.3C157.1,488.6 159.5,488.9 161.9,489.2C164.2,489.5 166.6,489.9 169.0,490.2C171.3,490.5 173.7,490.9 176.1,491.3C178.4,491.7 180.8,492.1 183.2,492.5C185.5,492.9 187.9,493.3 190.3,493.8C192.6,494.2 195.0,494.7 197.4,495.2C199.7,495.6 202.1,496.1 204.5,496.7C206.8,497.2 209.2,497.7 211.6,498.2C213.9,498.8 216.3,499.4 218.7,500.0C221.0,500.5 223.4,501.1 225.8,501.8C228.1,502.4 230.5,503.0 232.8,503.7C235.2,504.3 237.6,505.0 239.9,505.7C242.3,506.4 244.7,507.1 247.0,507.8C249.4,508.5 251.8,509.3 254.1,510.1C256.5,510.8 258.9,511.6 261.2,512.4C263.6,513.2 266.0,514.0 268.3,514.9C270.7,515.7 273.1,516.5 275.4,517.4C277.8,518.3 280.2,519.2 282.5,520.1C284.9,521.0 287.3,521.9 289.6,522.9C292.0,523.8 294.4,524.8 296.7,525.8C299.1,526.8 301.5,527.8 303.8,528.8C306.2,529.8 308.6,530.9 310.9,531.9C313.3,533.0 315.7,534.0 318.0,535.1C320.4,536.2 322.7,537.3 325.1,538.4C327.5,539.5 329.8,540.6 332.2,541.7C334.6,542.8 336.9,543.9 339.3,545.1C341.7,546.2 344.0,547.3 346.4,548.4C348.8,549.5 351.1,550.7 353.5,551.8C355.9,552.9 358.2,554.0 360.6,555.1C363.0,556.2 365.3,557.3 367.7,558.4C370.1,559.5 372.4,560.6 374.8,561.7C377.2,562.8 379.5,563.8 381.9,564.9C384.3,566.0 386.6,567.1 389.0,568.2C391.4,569.3 393.7,570.3 396.1,571.4C398.5,572.5 400.8,573.6 403.2,574.7C405.6,575.8 407.9,577.0 410.3,578.1C412.6,579.2 415.0,580.3 417.4,581.5C419.7,582.6 422.1,583.8 424.5,585.0C426.8,586.1 429.2,587.3 431.6,588.5C433.9,589.7 436.3,590.9 438.7,592.0C441.0,593.2 443.4,594.4 445.8,595.6C448.1,596.8 450.5,598.0 452.9,599.2C455.2,600.4 457.6,601.6 460.0,602.7C462.3,603.9 464.7,605.1 467.1,606.3C469.4,607.5 471.8,608.6 474.2,609.8C476.5,611.0 478.9,612.1 481.3,613.2C483.6,614.4 486.0,615.5 488.4,616.6C490.7,617.8 493.1,618.9 495.5,619.9C497.8,621.0 500.2,622.1 502.5,623.2C504.9,624.2 507.3,625.3 509.6,626.3C512.0,627.3 514.4,628.3 516.7,629.3C519.1,630.2 521.5,631.2 523.8,632.1C526.2,633.1 528.6,634.0 530.9,634.8C533.3,635.7 535.7,636.6 538.0,637.4C540.4,638.2 542.8,639.0 545.1,639.8C547.5,640.6 549.9,641.4 552.2,642.1C554.6,642.8 557.0,643.5 559.3,644.2C561.7,644.9 564.1,645.6 566.4,646.3C568.8,646.9 571.2,647.6 573.5,648.2C575.9,648.8 578.3,649.4 580.6,650.0C583.0,650.6 585.4,651.2 587.7,651.7C590.1,652.3 592.4,652.8 594.8,653.4C597.2,653.9 599.5,654.4 601.9,654.9C604.3,655.4 606.6,655.9 609.0,656.4C611.4,656.9 613.7,657.4 616.1,657.8C618.5,658.3 620.8,658.8 623.2,659.2C625.6,659.7 627.9,660.1 630.3,660.6C632.7,661.0 635.0,661.4 637.4,661.9C639.8,662.3 642.1,662.7 644.5,663.1C646.9,663.6 649.2,664.0 651.6,664.4C654.0,664.8 656.3,665.2 658.7,665.7C661.1,666.1 663.4,666.5 665.8,666.9C668.2,667.3 670.5,667.8 672.9,668.2C675.3,668.6 677.6,669.0 680.0,669.5C682.3,669.9 684.7,670.3 687.1,670.8C689.4,671.2 691.8,671.7 694.2,672.1C696.5,672.6 698.9,673.0 701.3,673.4C703.6,673.9 706.0,674.3 708.4,674.8C710.7,675.2 713.1,675.7 715.5,676.1C717.8,676.5 720.2,677.0 722.6,677.4C724.9,677.8 727.3,678.2 729.7,678.6C732.0,679.0 734.4,679.4 736.8,679.8C739.1,680.2 741.5,680.5 743.9,680.9C746.2,681.2 748.6,681.6 751.0,681.9C753.3,682.2 755.7,682.5 758.1,682.8C760.4,683.1 762.8,683.4 765.2,683.6C767.5,683.9 769.9,684.1 772.2,684.3C774.6,684.6 777.0,684.8 779.3,685.0C781.7,685.2 784.1,685.4 786.4,685.5C788.8,685.7 791.2,685.9 793.5,686.0C795.9,686.2 798.3,686.3 800.6,686.5C803.0,686.6 805.4,686.7 807.7,686.9C810.1,687.0 812.5,687.1 814.8,687.2C817.2,687.3 819.6,687.4 821.9,687.5C824.3,687.6 826.7,687.7 829.0,687.8C831.4,687.9 833.8,688.0 836.1,688.1C838.5,688.2 840.9,688.3 843.2,688.3C845.6,688.4 848.0,688.5 850.3,688.6C852.7,688.7 855.1,688.8 857.4,688.9C859.8,689.0 862.1,689.1 864.5,689.2C866.9,689.3 869.2,689.4 871.6,689.5C874.0,689.6 876.3,689.7 878.7,689.8C881.1,689.9 883.4,690.1 885.8,690.2C888.2,690.3 890.5,690.5 892.9,690.6C895.3,690.8 898.8,691.0 900.0,691.1" stroke="#ad00cc"/>
<path d="M98.0,485.8C99.2,485.9 102.8,486.1 105.1,486.3C107.5,486.5 109.9,486.7 112.3,486.9C114.6,487.0 117.0,487.2 119.4,487.4C121.8,487.6 124.1,487.8 126.5,488.0C128.9,488.2 131.3,488.4 133.7,488.6C136.0,488.8 138.4,489.0 140.8,489.2C143.2,489.5 145.5,489.7 147.9,490.0C150.3,490.2 152.7,490.5 155.0,490.8C157.4,491.1 159.8,491.4 162.2,491.7C164.6,492.0 166.9,492.3 169.3,492.7C171.7,493.1 174.1,493.4 176.4,493.8C178.8,494.2 181.2,494.7 183.6,495.1C185.9,495.6 188.3,496.1 190.7,496.6C193.1,497.1 195.5,497.6 197.8,498.2C200.2,498.8 202.6,499.4 205.0,500.0C207.3,500.6 209.7,501.3 212.1,502.0C214.5,502.7 216.8,503.5 219.2,504.2C221.6,505.0 224.0,505.8 226.4,506.7C228.7,507.5 231.1,508.4 233.5,509.3C235.9,510.2 238.2,511.2 240.6,512.2C243.0,513.1 245.4,514.2 247.8,515.2C250.1,516.3 252.5,517.4 254.9,518.5C257.3,519.6 259.6,520.7 262.0,521.9C264.4,523.1 266.8,524.3 269.1,525.5C271.5,526.7 273.9,527.9 276.3,529.1C278.7,530.3 281.0,531.6 283.4,532.8C285.8,534.1 288.2,535.4 290.5,536.7C292.9,538.0 295.3,539.3 297.7,540.6C300.0,541.9 302.4,543.3 304.8,544.7C307.2,546.0 309.6,547.4 311.9,548.9C314.3,550.3 316.7,551.7 319.1,553.2C321.4,554.7 323.8,556.2 326.2,557.7C328.6,559.2 330.9,560.8 333.3,562.3C335.7,563.9 338.1,565.5 340.5,567.2C342.8,568.8 345.2,570.5 347.6,572.2C350.0,573.9 352.3,575.7 354.7,577.5C357.1,579.2 359.5,581.1 361.8,582.9C364.2,584.8 366.6,586.7 369.0,588.6C371.4,590.5 373.7,592.5 376.1,594.5C378.5,596.5 380.9,598.6 383.2,600.7C385.6,602.8 388.0,604.9 390.4,607.1C392.7,609.3 395.1,611.6 397.5,613.9C399.9,616.1 402.3,618.5 404.6,620.9C407.0,623.3 409.4,625.7 411.8,628.2C414.1,630.7 416.5,633.2 418.9,635.8C421.3,638.4 423.6,641.0 426.0,643.7C428.4,646.5 430.8,649.2 433.2,652.0C435.5,654.9 437.9,657.7 440.3,660.7C442.7,663.6 445.0,666.6 447.4,669.6C449.8,672.7 452.2,675.8 454.5,679.0C456.9,682.1 459.3,685.3 461.7,688.6C464.1,691.9 466.4,695.2 468.8,698.5C471.2,701.9 473.6,705.3 475.9,708.7C478.3,712.2 480.7,715.7 483.1,719.2C485.4,722.8 487.8,726.4 490.2,730.0C492.6,733.6 495.0,737.3 497.3,741.0C499.7,744.7 502.1,748.4 504.5,752.2C506.8,755.9 509.2,759.7 511.6,763.6C514.0,767.4 516.3,771.3 518.7,775.1C521.1,779.0 523.5,782.9 525.9,786.8C528.2,790.8 530.6,794.7 533.0,798.7C535.4,802.6 537.7,806.6 540.1,810.5C542.5,814.5 544.9,818.5 547.2,822.5C549.6,826.5 552.0,830.5 554.4,834.5C556.8,838.5 559.1,842.4 561.5,846.4C563.9,850.4 566.3,854.4 568.6,858.4C571.0,862.4 573.4,866.4 575.8,870.4C578.2,874.3 580.5,878.3 582.9,882.3C585.3,886.3 587.7,890.3 590.0,894.3C592.4,898.3 594.8,902.3 597.2,906.3C599.5,910.4 601.9,914.4 604.3,918.4C606.7,922.4 609.1,926.5 611.4,930.5C613.8,934.6 616.2,938.6 618.6,942.7C620.9,946.8 623.3,950.9 625.7,955.0C628.1,959.1 630.4,963.2 632.8,967.3C635.2,971.5 637.6,975.6 640.0,979.8C642.3,983.9 644.7,988.1 647.1,992.3C649.5,996.5 651.8,1000.7 654.2,1004.9C656.6,1009.2 659.0,1013.4 661.3,1017.6C663.7,1021.9 666.1,1026.1 668.5,1030.3C670.9,1034.6 673.2,1038.8 675.6,1043.1C678.0,1047.3 680.4,1051.5 682.7,1055.7C685.1,1060.0 687.5,1064.2 689.9,1068.4C692.2,1072.6 695.8,1078.9 697.0,1081.0" stroke="#ff9000"/>
</g>
<rect x="465" y="52.5" width="2" height="1023" fill="#000"/>
<rect x="98" y="317" width="1956" height="2" fill="#000"/>
<rect x="102" y="21.6" width="1954.5" height="27" fill="#74777b"/>
<rect x="103" y="22.8" width="308" height="24.3" fill="#ff9a9e"/>
<text x="255.8" y="44.3" text-anchor="middle" fill="#3f3f3f" word-spacing="2.2" stroke="#3f3f3f" stroke-width=".45">Sub bass</text>
<rect x="413" y="22.8" width="402" height="24.3" fill="#fde293"/>
<text x="612.8" y="44.3" text-anchor="middle" fill="#3f3f3f" word-spacing="2.2" stroke="#3f3f3f" stroke-width=".45">Bass</text>
<rect x="817" y="22.8" width="194" height="24.3" fill="#c9ea97"/>
<text x="912.8" y="44.3" text-anchor="middle" fill="#3f3f3f" word-spacing="2.2" stroke="#3f3f3f" stroke-width=".45">Low mid</text>
<rect x="1013" y="22.8" width="390" height="24.3" fill="#8de4a7"/>
<text x="1206.8" y="44.3" text-anchor="middle" fill="#3f3f3f" word-spacing="2.2" stroke="#3f3f3f" stroke-width=".45">Mid</text>
<rect x="1405" y="22.8" width="194" height="24.3" fill="#8fded8"/>
<text x="1500.8" y="44.3" text-anchor="middle" fill="#3f3f3f" word-spacing="2.2" stroke="#3f3f3f" stroke-width=".45">Upper mid</text>
<rect x="1601" y="22.8" width="114" height="24.3" fill="#9db5e0"/>
<text x="1656.8" y="44.3" text-anchor="middle" fill="#3f3f3f" word-spacing="2.2" stroke="#3f3f3f" stroke-width=".45">Presence</text>
<rect x="1717" y="22.8" width="338" height="24.3" fill="#b9a1cd"/>
<text x="1884.8" y="44.3" text-anchor="middle" fill="#3f3f3f" word-spacing="2.2" stroke="#3f3f3f" stroke-width=".45">Brilliance</text>
<text transform="translate(98.5,42) scale(.955,1)" text-anchor="end" fill="#222" stroke="#222" stroke-width=".45">SPL</text>
<text transform="translate(98.2,1015.6) scale(.97,1)" text-anchor="end" fill="#1c1c1c" stroke="#1c1c1c" stroke-width=".45">40</text>
<text transform="translate(98.2,947.6) scale(.97,1)" text-anchor="end" fill="#7d7d7d" stroke="#7d7d7d" stroke-width=".45">45</text>
<text transform="translate(98.2,877.6) scale(.97,1)" text-anchor="end" fill="#1c1c1c" stroke="#1c1c1c" stroke-width=".45">50</text>
<text transform="translate(98.2,807.6) scale(.97,1)" text-anchor="end" fill="#7d7d7d" stroke="#7d7d7d" stroke-width=".45">55</text>
<text transform="translate(98.2,737.6) scale(.97,1)" text-anchor="end" fill="#1c1c1c" stroke="#1c1c1c" stroke-width=".45">60</text>
<text transform="translate(98.2,669.6) scale(.97,1)" text-anchor="end" fill="#7d7d7d" stroke="#7d7d7d" stroke-width=".45">65</text>
<text transform="translate(98.2,599.6) scale(.97,1)" text-anchor="end" fill="#1c1c1c" stroke="#1c1c1c" stroke-width=".45">70</text>
<text transform="translate(98.2,529.6) scale(.97,1)" text-anchor="end" fill="#7d7d7d" stroke="#7d7d7d" stroke-width=".45">75</text>
<text transform="translate(98.2,459.6) scale(.97,1)" text-anchor="end" fill="#1c1c1c" stroke="#1c1c1c" stroke-width=".45">80</text>
<text transform="translate(98.2,391.6) scale(.97,1)" text-anchor="end" fill="#7d7d7d" stroke="#7d7d7d" stroke-width=".45">85</text>
<text transform="translate(98.2,251.6) scale(.97,1)" text-anchor="end" fill="#7d7d7d" stroke="#7d7d7d" stroke-width=".45">95</text>
<text transform="translate(98.2,181.6) scale(.97,1)" text-anchor="end" fill="#1c1c1c" stroke="#1c1c1c" stroke-width=".45">100</text>
<text transform="translate(98.2,113.6) scale(.97,1)" text-anchor="end" fill="#7d7d7d" stroke="#7d7d7d" stroke-width=".45">105</text>
<text x="103.9" y="1104" text-anchor="middle" fill="#1c1c1c" stroke="#1c1c1c" stroke-width=".45">20</text>
<text x="217.9" y="1104" text-anchor="middle" fill="#1c1c1c" stroke="#1c1c1c" stroke-width=".45">30</text>
<text x="299.9" y="1104" text-anchor="middle" fill="#1c1c1c" stroke="#1c1c1c" stroke-width=".45">40</text>
<text x="361.9" y="1104" text-anchor="middle" fill="#1c1c1c" stroke="#1c1c1c" stroke-width=".45">50</text>
<text x="413.9" y="1104" text-anchor="middle" fill="#1c1c1c" stroke="#1c1c1c" stroke-width=".45">60</text>
<text x="495.9" y="1104" text-anchor="middle" fill="#1c1c1c" stroke="#1c1c1c" stroke-width=".45">80</text>
<text x="559.1" y="1104" text-anchor="middle" fill="#1c1c1c" stroke="#1c1c1c" stroke-width=".45">100</text>
<text x="755.1" y="1104" text-anchor="middle" fill="#1c1c1c" stroke="#1c1c1c" stroke-width=".45">200</text>
<text x="871.1" y="1104" text-anchor="middle" fill="#1c1c1c" stroke="#1c1c1c" stroke-width=".45">300</text>
<text x="951.1" y="1104" text-anchor="middle" fill="#1c1c1c" stroke="#1c1c1c" stroke-width=".45">400</text>
<text x="1015.1" y="1104" text-anchor="middle" fill="#1c1c1c" stroke="#1c1c1c" stroke-width=".45">500</text>
<text x="1067.1000000000001" y="1104" text-anchor="middle" fill="#1c1c1c" stroke="#1c1c1c" stroke-width=".45">600</text>
<text x="1147.1000000000001" y="1104" text-anchor="middle" fill="#1c1c1c" stroke="#1c1c1c" stroke-width=".45">800</text>
<text x="1209.9" y="1104" text-anchor="middle" fill="#1c1c1c" stroke="#1c1c1c" stroke-width=".45">1k</text>
<text x="1405.9" y="1104" text-anchor="middle" fill="#1c1c1c" stroke="#1c1c1c" stroke-width=".45">2k</text>
<text x="1519.9" y="1104" text-anchor="middle" fill="#1c1c1c" stroke="#1c1c1c" stroke-width=".45">3k</text>
<text x="1601.9" y="1104" text-anchor="middle" fill="#1c1c1c" stroke="#1c1c1c" stroke-width=".45">4k</text>
<text x="1663.9" y="1104" text-anchor="middle" fill="#1c1c1c" stroke="#1c1c1c" stroke-width=".45">5k</text>
<text x="1715.9" y="1104" text-anchor="middle" fill="#1c1c1c" stroke="#1c1c1c" stroke-width=".45">6k</text>
<text x="1759.9" y="1104" text-anchor="middle" fill="#1c1c1c" stroke="#1c1c1c" stroke-width=".45">7k</text>
<text x="1797.9" y="1104" text-anchor="middle" fill="#1c1c1c" stroke="#1c1c1c" stroke-width=".45">8k</text>
<text x="1861.1000000000001" y="1104" text-anchor="middle" fill="#1c1c1c" stroke="#1c1c1c" stroke-width=".45">10k</text>
<text x="2017.5" y="1104" fill="#1c1c1c" stroke="#1c1c1c" stroke-width=".45">20kHz</text>
<rect x="38" y="302" width="60" height="31.5" fill="#fff" stroke="#0000ff" stroke-width="2"/>
<text x="95.5" y="329.6" text-anchor="end" fill="#0000fa" stroke="#0000fa" stroke-width=".45">89.5</text>
<rect x="436" y="1076" width="57.5" height="32" fill="#fff" stroke="#0000ff" stroke-width="2"/>
<text x="491.5" y="1104" text-anchor="end" fill="#0000fa" stroke="#0000fa" stroke-width=".45">72.4</text>
</svg>
<div id="panel" style="position:absolute;left:866px;top:381px;width:1138.0px;height:660.0px;border-radius:27px;background:#232629;box-shadow:27px 30px 19px rgba(0,0,0,.5);overflow:hidden">
<svg width="1138.0" height="660.0" viewBox="866 381 1138.0 660.0" style="position:absolute;left:0;top:0;display:block;will-change:transform" font-family='"Liberation Sans", sans-serif'>
<defs>
<linearGradient id="hg" x1="0" y1="0" x2="0" y2="1">
<stop offset="0" stop-color="#8e8e8e"/><stop offset=".02" stop-color="#b4b4b4"/><stop offset=".10" stop-color="#c0c0c0"/>
<stop offset=".115" stop-color="#e6e6e6"/><stop offset=".14" stop-color="#e0e0e0"/><stop offset=".15" stop-color="#878787"/>
<stop offset=".22" stop-color="#8a8a8a"/><stop offset=".34" stop-color="#8f8f8f"/><stop offset=".36" stop-color="#a2a2a2"/>
<stop offset=".47" stop-color="#a6a6a6"/><stop offset=".483" stop-color="#404040"/><stop offset=".513" stop-color="#404040"/>
<stop offset=".525" stop-color="#aeaeae"/><stop offset=".63" stop-color="#b4b4b4"/><stop offset=".65" stop-color="#c6c6c6"/>
<stop offset=".8" stop-color="#cccccc"/><stop offset=".815" stop-color="#e8e8e8"/><stop offset=".855" stop-color="#e2e2e2"/>
<stop offset=".865" stop-color="#8a8a8a"/><stop offset=".9" stop-color="#989898"/><stop offset="1" stop-color="#a6a6a6"/></linearGradient>
<linearGradient id="hg2" x1="0" y1="0" x2="0" y2="1">
<stop offset="0" stop-color="#8a8a8a"/><stop offset=".03" stop-color="#adadad"/><stop offset=".11" stop-color="#b4b4b4"/>
<stop offset=".13" stop-color="#d2d2d2"/><stop offset=".155" stop-color="#cccccc"/><stop offset=".17" stop-color="#858585"/>
<stop offset=".3" stop-color="#838383"/><stop offset=".36" stop-color="#8e8e8e"/><stop offset=".47" stop-color="#9a9a9a"/>
<stop offset=".485" stop-color="#4a4a4a"/><stop offset=".515" stop-color="#4a4a4a"/><stop offset=".53" stop-color="#a2a2a2"/>
<stop offset=".64" stop-color="#a9a9a9"/><stop offset=".66" stop-color="#b8b8b8"/><stop offset=".8" stop-color="#bebebe"/>
<stop offset=".815" stop-color="#d6d6d6"/><stop offset=".85" stop-color="#d0d0d0"/><stop offset=".865" stop-color="#838383"/>
<stop offset=".9" stop-color="#8e8e8e"/><stop offset="1" stop-color="#9a9a9a"/></linearGradient>
<linearGradient id="wg" x1="0" y1="0" x2="0" y2="1">
<stop offset="0" stop-color="#b5b1b1"/><stop offset=".5" stop-color="#a19e9e"/><stop offset="1" stop-color="#6e6c6e"/></linearGradient>
<linearGradient id="lo" x1="0" y1="0" x2="0" y2="1">
<stop offset="0" stop-color="#84d0ee"/><stop offset=".06" stop-color="#4cb6e3"/><stop offset=".15" stop-color="#158fca"/>
<stop offset=".3" stop-color="#0b74a7"/><stop offset=".5" stop-color="#0a608c"/><stop offset=".75" stop-color="#07486a"/><stop offset="1" stop-color="#032a40"/></linearGradient>
<linearGradient id="li" x1="0" y1="0" x2="0" y2="1">
<stop offset="0" stop-color="#00aaf0"/><stop offset=".45" stop-color="#0596d6"/><stop offset="1" stop-color="#0a7cb4"/></linearGradient>
<filter id="b2" x="-20%" y="-20%" width="140%" height="140%"><feGaussianBlur stdDeviation="0.9"/></filter>
<linearGradient id="wg2" x1="0" y1="0" x2="1" y2="0">
<stop offset="0" stop-color="#fff" stop-opacity=".22"/><stop offset=".45" stop-color="#fff" stop-opacity="0"/><stop offset="1" stop-color="#000" stop-opacity=".22"/></linearGradient>
<pattern id="rib" width="4" height="2.5" patternUnits="userSpaceOnUse"><rect width="4" height="1" fill="#000" opacity=".075"/></pattern>
<filter id="b1" x="-20%" y="-20%" width="140%" height="140%"><feGaussianBlur stdDeviation="1.2"/></filter>
</defs>
<rect x="866" y="381" width="160" height="240.6" fill="#2a2d37"/>
<path d="M1016,381 H2004 V621.7 H1021 Q1016,621.7 1016,616.7 Z" fill="#323640"/>
<text x="874.2" y="416.2" font-size="29" fill="#f6f6f6">-5dB</text>
<path d="M866,465.8 H977 Q983,465.8 983,471.8 V508.4 Q983,514.4 977,514.4 H866 Z" fill="#15171b"/>
<path d="M866,464 H977 Q983,464 983,470 V506.8 Q983,512.8 977,512.8 H866 Z" fill="#484d5a"/>
<g transform="translate(884.2,488.5) scale(1.0,1.0)" fill="#ece8e6" stroke="none"><path d="M0,-8.4 H10.1 L21,-17 Q22.9,-18.3 22.9,-16 V16.2 Q22.9,18.5 21,17.2 L10.1,9 H0 Z"/><path d="M27.5,-7.3 A8.1,8.1 0 0 1 27.5,7.3" fill="none" stroke="#ece8e6" stroke-width="2.5" stroke-linecap="round"/><path d="M33.5,-12.9 A16.6,16.6 0 0 1 33.5,12.7" fill="none" stroke="#ece8e6" stroke-width="2.5" stroke-linecap="round"/></g>
<rect x="884.0" y="564.8" width="106.5" height="45.7" rx="6" fill="#17191d"/><rect x="884.0" y="563.2" width="106.5" height="45.7" rx="6" fill="#484d5a"/><rect x="887.6" y="563.2" width="99.3" height="1" fill="#5a6376" opacity=".8"/>
<text x="909.9" y="594.4" font-size="24.2" fill="#f8f8f8">ms</text>
<path d="M966.1,582.3 h15 l-7.5,12.2 Z" fill="#fff"/>
<text x="1046.2" y="589.9" font-size="22.6" fill="#f4f4f4">BP</text>
<rect x="1129.4" y="410.3" width="7" height="140" fill="#1b1c1e"/>
<rect x="1131.6" y="410.3" width="2.6" height="140" fill="#2b2c2e"/>
<rect x="1119.3" y="468.6" width="27.4" height="52.2" rx="1.5" fill="#16181c" opacity=".75" filter="url(#b1)"/><rect x="1120.6" y="469.2" width="24.6" height="49.6" rx="1" fill="url(#hg)"/><rect x="1120.6" y="469.2" width="24.6" height="49.6" rx="1" fill="url(#rib)"/>
<circle cx="1132.9" cy="580.1" r="15.9" fill="#15222c" opacity=".8"/><circle cx="1132.9" cy="579.8" r="15.1" fill="url(#lo)"/><ellipse cx="1132.9" cy="579.5" rx="12.3" ry="11.4" fill="url(#li)" filter="url(#b2)"/>
<rect x="1193.4" y="410.3" width="7" height="140" fill="#1b1c1e"/>
<rect x="1195.6" y="410.3" width="2.6" height="140" fill="#2b2c2e"/>
<rect x="1183.3" y="422.8" width="27.4" height="52.2" rx="1.5" fill="#16181c" opacity=".75" filter="url(#b1)"/><rect x="1184.6" y="423.4" width="24.6" height="49.6" rx="1" fill="url(#hg)"/><rect x="1184.6" y="423.4" width="24.6" height="49.6" rx="1" fill="url(#rib)"/>
<circle cx="1196.9" cy="580.1" r="15.9" fill="#15222c" opacity=".8"/><circle cx="1196.9" cy="579.8" r="15.1" fill="url(#lo)"/><ellipse cx="1196.9" cy="579.5" rx="12.3" ry="11.4" fill="url(#li)" filter="url(#b2)"/>
<rect x="1257.4" y="410.3" width="7" height="140" fill="#1b1c1e"/>
<rect x="1259.6" y="410.3" width="2.6" height="140" fill="#2b2c2e"/>
<rect x="1247.3" y="476.8" width="27.4" height="52.2" rx="1.5" fill="#16181c" opacity=".75" filter="url(#b1)"/><rect x="1248.6" y="477.4" width="24.6" height="49.6" rx="1" fill="url(#hg)"/><rect x="1248.6" y="477.4" width="24.6" height="49.6" rx="1" fill="url(#rib)"/>
<circle cx="1260.9" cy="580.1" r="15.9" fill="#15222c" opacity=".8"/><circle cx="1260.9" cy="579.8" r="15.1" fill="url(#lo)"/><ellipse cx="1260.9" cy="579.5" rx="12.3" ry="11.4" fill="url(#li)" filter="url(#b2)"/>
<rect x="1321.4" y="410.3" width="7" height="140" fill="#1b1c1e"/>
<rect x="1323.6" y="410.3" width="2.6" height="140" fill="#2b2c2e"/>
<rect x="1311.3" y="422.8" width="27.4" height="52.2" rx="1.5" fill="#16181c" opacity=".75" filter="url(#b1)"/><rect x="1312.6" y="423.4" width="24.6" height="49.6" rx="1" fill="url(#hg)"/><rect x="1312.6" y="423.4" width="24.6" height="49.6" rx="1" fill="url(#rib)"/>
<circle cx="1324.9" cy="580.1" r="15.9" fill="#15222c" opacity=".8"/><circle cx="1324.9" cy="579.8" r="15.1" fill="url(#lo)"/><ellipse cx="1324.9" cy="579.5" rx="12.3" ry="11.4" fill="url(#li)" filter="url(#b2)"/>
<rect x="1385.4" y="410.3" width="7" height="140" fill="#1b1c1e"/>
<rect x="1387.6" y="410.3" width="2.6" height="140" fill="#2b2c2e"/>
<rect x="1375.3" y="453.1" width="27.4" height="52.2" rx="1.5" fill="#16181c" opacity=".75" filter="url(#b1)"/><rect x="1376.6" y="453.7" width="24.6" height="49.6" rx="1" fill="url(#hg)"/><rect x="1376.6" y="453.7" width="24.6" height="49.6" rx="1" fill="url(#rib)"/>
<circle cx="1388.9" cy="580.1" r="15.9" fill="#15222c" opacity=".8"/><circle cx="1388.9" cy="579.8" r="15.1" fill="url(#lo)"/><ellipse cx="1388.9" cy="579.5" rx="12.3" ry="11.4" fill="url(#li)" filter="url(#b2)"/>
<rect x="1449.4" y="410.3" width="7" height="140" fill="#1b1c1e"/>
<rect x="1451.6" y="410.3" width="2.6" height="140" fill="#2b2c2e"/>
<rect x="1439.3" y="439.0" width="27.4" height="52.2" rx="1.5" fill="#16181c" opacity=".75" filter="url(#b1)"/><rect x="1440.6" y="439.6" width="24.6" height="49.6" rx="1" fill="url(#hg)"/><rect x="1440.6" y="439.6" width="24.6" height="49.6" rx="1" fill="url(#rib)"/>
<circle cx="1452.9" cy="580.1" r="15.9" fill="#15222c" opacity=".8"/><circle cx="1452.9" cy="579.8" r="15.1" fill="url(#lo)"/><ellipse cx="1452.9" cy="579.5" rx="12.3" ry="11.4" fill="url(#li)" filter="url(#b2)"/>
<rect x="1513.4" y="410.3" width="7" height="140" fill="#1b1c1e"/>
<rect x="1515.6" y="410.3" width="2.6" height="140" fill="#2b2c2e"/>
<rect x="1503.3" y="448.9" width="27.4" height="52.2" rx="1.5" fill="#16181c" opacity=".75" filter="url(#b1)"/><rect x="1504.6" y="449.5" width="24.6" height="49.6" rx="1" fill="url(#hg)"/><rect x="1504.6" y="449.5" width="24.6" height="49.6" rx="1" fill="url(#rib)"/>
<circle cx="1516.9" cy="580.1" r="15.9" fill="#15222c" opacity=".8"/><circle cx="1516.9" cy="579.8" r="15.1" fill="url(#lo)"/><ellipse cx="1516.9" cy="579.5" rx="12.3" ry="11.4" fill="url(#li)" filter="url(#b2)"/>
<rect x="1577.4" y="410.3" width="7" height="140" fill="#1b1c1e"/>
<rect x="1579.6" y="410.3" width="2.6" height="140" fill="#2b2c2e"/>
<rect x="1567.3" y="468.8" width="27.4" height="52.2" rx="1.5" fill="#16181c" opacity=".75" filter="url(#b1)"/><rect x="1568.6" y="469.4" width="24.6" height="49.6" rx="1" fill="url(#hg)"/><rect x="1568.6" y="469.4" width="24.6" height="49.6" rx="1" fill="url(#rib)"/>
<circle cx="1580.9" cy="580.1" r="15.9" fill="#15222c" opacity=".8"/><circle cx="1580.9" cy="579.8" r="15.1" fill="url(#lo)"/><ellipse cx="1580.9" cy="579.5" rx="12.3" ry="11.4" fill="url(#li)" filter="url(#b2)"/>
<rect x="1641.4" y="410.3" width="7" height="140" fill="#1b1c1e"/>
<rect x="1643.6" y="410.3" width="2.6" height="140" fill="#2b2c2e"/>
<rect x="1631.3" y="452.9" width="27.4" height="52.2" rx="1.5" fill="#16181c" opacity=".75" filter="url(#b1)"/><rect x="1632.6" y="453.5" width="24.6" height="49.6" rx="1" fill="url(#hg)"/><rect x="1632.6" y="453.5" width="24.6" height="49.6" rx="1" fill="url(#rib)"/>
<circle cx="1644.9" cy="580.1" r="15.9" fill="#15222c" opacity=".8"/><circle cx="1644.9" cy="579.8" r="15.1" fill="url(#lo)"/><ellipse cx="1644.9" cy="579.5" rx="12.3" ry="11.4" fill="url(#li)" filter="url(#b2)"/>
<rect x="1705.4" y="410.3" width="7" height="140" fill="#1b1c1e"/>
<rect x="1707.6" y="410.3" width="2.6" height="140" fill="#2b2c2e"/>
<rect x="1695.3" y="475.0" width="27.4" height="52.2" rx="1.5" fill="#16181c" opacity=".75" filter="url(#b1)"/><rect x="1696.6" y="475.6" width="24.6" height="49.6" rx="1" fill="url(#hg)"/><rect x="1696.6" y="475.6" width="24.6" height="49.6" rx="1" fill="url(#rib)"/>
<circle cx="1708.9" cy="580.1" r="15.9" fill="#15222c" opacity=".8"/><circle cx="1708.9" cy="579.8" r="15.1" fill="url(#lo)"/><ellipse cx="1708.9" cy="579.5" rx="12.3" ry="11.4" fill="url(#li)" filter="url(#b2)"/>
<rect x="1769.4" y="410.3" width="7" height="140" fill="#1b1c1e"/>
<rect x="1771.6" y="410.3" width="2.6" height="140" fill="#2b2c2e"/>
<rect x="1759.3" y="464.8" width="27.4" height="52.2" rx="1.5" fill="#16181c" opacity=".75" filter="url(#b1)"/><rect x="1760.6" y="465.4" width="24.6" height="49.6" rx="1" fill="url(#hg)"/><rect x="1760.6" y="465.4" width="24.6" height="49.6" rx="1" fill="url(#rib)"/>
<circle cx="1772.9" cy="580.1" r="15.9" fill="#15222c" opacity=".8"/><circle cx="1772.9" cy="579.8" r="15.1" fill="url(#lo)"/><ellipse cx="1772.9" cy="579.5" rx="12.3" ry="11.4" fill="url(#li)" filter="url(#b2)"/>
<rect x="1833.4" y="410.3" width="7" height="140" fill="#1b1c1e"/>
<rect x="1835.6" y="410.3" width="2.6" height="140" fill="#2b2c2e"/>
<rect x="1823.3" y="464.8" width="27.4" height="52.2" rx="1.5" fill="#16181c" opacity=".75" filter="url(#b1)"/><rect x="1824.6" y="465.4" width="24.6" height="49.6" rx="1" fill="url(#hg)"/><rect x="1824.6" y="465.4" width="24.6" height="49.6" rx="1" fill="url(#rib)"/>
<circle cx="1836.9" cy="580.1" r="15.9" fill="#15222c" opacity=".8"/><circle cx="1836.9" cy="579.8" r="15.1" fill="url(#lo)"/><ellipse cx="1836.9" cy="579.5" rx="12.3" ry="11.4" fill="url(#li)" filter="url(#b2)"/>
<rect x="1897.4" y="410.3" width="7" height="140" fill="#1b1c1e"/>
<rect x="1899.6" y="410.3" width="2.6" height="140" fill="#2b2c2e"/>
<rect x="1887.3" y="431.0" width="27.4" height="52.2" rx="1.5" fill="#16181c" opacity=".75" filter="url(#b1)"/><rect x="1888.6" y="431.6" width="24.6" height="49.6" rx="1" fill="url(#hg)"/><rect x="1888.6" y="431.6" width="24.6" height="49.6" rx="1" fill="url(#rib)"/>
<circle cx="1900.9" cy="580.1" r="15.9" fill="#15222c" opacity=".8"/><circle cx="1900.9" cy="579.8" r="15.1" fill="url(#lo)"/><ellipse cx="1900.9" cy="579.5" rx="12.3" ry="11.4" fill="url(#li)" filter="url(#b2)"/>
<rect x="1961.4" y="410.3" width="7" height="140" fill="#1b1c1e"/>
<rect x="1963.6" y="410.3" width="2.6" height="140" fill="#2b2c2e"/>
<rect x="1951.3" y="444.9" width="27.4" height="52.2" rx="1.5" fill="#16181c" opacity=".75" filter="url(#b1)"/><rect x="1952.6" y="445.5" width="24.6" height="49.6" rx="1" fill="url(#hg)"/><rect x="1952.6" y="445.5" width="24.6" height="49.6" rx="1" fill="url(#rib)"/>
<circle cx="1964.9" cy="579.8" r="15.2" fill="#55575b"/><circle cx="1964.9" cy="580.4" r="13.8" fill="#2b2c2f"/>
<rect x="877" y="642" width="224.1" height="391.6" fill="#141112"/>
<rect x="880.5" y="647.2" width="216.4" height="385.8" rx="4" fill="#0f1012"/><rect x="878.9" y="646.0" width="218.4" height="385.8" rx="4.5" fill="#33363f"/><path d="M880.9,685.6 V650.0 Q880.9,646.0 884.9,646.0 H1093.3 Q1097.3,646.0 1097.3,650.0 V685.6 Z" fill="#00a1fe"/><text transform="translate(988.9,676.1) scale(.961,1)" text-anchor="middle" font-size="29.5" fill="#fbfbfb">CH1</text><rect x="884.9" y="696.0" width="208.4" height="39.8" rx="6" fill="#8430d6"/><text transform="translate(975.1,722.6) scale(.972,1)" text-anchor="middle" font-size="27.2" fill="#fbfbfb">FL-Tweeter</text><path d="M1074.7,711.8 h14.6 l-7.3,10.3 Z" fill="#fff"/><path d="M951.9,773.0 H962.9 L952.3,918.6 H951.5 Z" fill="url(#wg)"/><path d="M951.9,773.0 H962.9 L952.3,918.6 H951.5 Z" fill="url(#wg2)"/><rect x="944.2" y="771.4" width="5" height="148.4" fill="#18191b"/><rect x="945.9" y="771.4" width="1.6" height="148.4" fill="#2c2d2f"/><rect x="926.4" y="771.1" width="14.7" height="2.4" fill="#c2c2c2"/><rect x="933.3" y="783.3" width="7.2" height="2.4" fill="#c2c2c2"/><rect x="933.3" y="795.6" width="7.2" height="2.4" fill="#c2c2c2"/><rect x="933.3" y="807.8" width="7.2" height="2.4" fill="#c2c2c2"/><rect x="926.4" y="820.0" width="14.7" height="2.4" fill="#c2c2c2"/><rect x="933.3" y="832.2" width="7.2" height="2.4" fill="#c2c2c2"/><rect x="933.3" y="844.5" width="7.2" height="2.4" fill="#c2c2c2"/><rect x="933.3" y="856.7" width="7.2" height="2.4" fill="#c2c2c2"/><rect x="926.4" y="868.9" width="14.7" height="2.4" fill="#c2c2c2"/><rect x="933.3" y="881.2" width="7.2" height="2.4" fill="#c2c2c2"/><rect x="933.3" y="893.4" width="7.2" height="2.4" fill="#c2c2c2"/><rect x="933.3" y="905.6" width="7.2" height="2.4" fill="#c2c2c2"/><rect x="926.4" y="917.9" width="14.7" height="2.4" fill="#c2c2c2"/><text x="923.5" y="779.0" text-anchor="end" font-size="17.5" fill="#c2c2c2" textLength="7.8" lengthAdjust="spacingAndGlyphs">0</text><text x="923.5" y="827.9" text-anchor="end" font-size="17.5" fill="#c2c2c2" textLength="25.4" lengthAdjust="spacingAndGlyphs">−20</text><text x="923.5" y="876.8" text-anchor="end" font-size="17.5" fill="#c2c2c2" textLength="26.0" lengthAdjust="spacingAndGlyphs">−40</text><text x="923.5" y="925.8" text-anchor="end" font-size="17.5" fill="#c2c2c2" textLength="25.4" lengthAdjust="spacingAndGlyphs">OFF</text><rect x="929.1" y="761.1" width="26" height="46.4" rx="1.5" fill="#121316" opacity=".8" filter="url(#b1)"/><rect x="930.5" y="761.9" width="22.6" height="44" rx="1" fill="url(#hg2)"/><rect x="930.5" y="761.9" width="22.6" height="44" rx="1" fill="url(#rib)"/><text transform="translate(1023.3,776.6) scale(.955,1)" text-anchor="middle" font-size="27" fill="#fbfbfb">-5.5dB</text><rect x="984.0" y="792.6" width="88.0" height="40.6" rx="6" fill="#17191d"/><rect x="984.0" y="791.0" width="88.0" height="40.6" rx="6" fill="#484d5a"/><rect x="987.6" y="791.0" width="80.8" height="1" fill="#5a6376" opacity=".8"/><g transform="translate(1007.2,811.6) scale(0.955,0.84)" fill="#efefef" stroke="none"><path d="M0,-8.4 H10.1 L21,-17 Q22.9,-18.3 22.9,-16 V16.2 Q22.9,18.5 21,17.2 L10.1,9 H0 Z"/><path d="M27.5,-7.3 A8.1,8.1 0 0 1 27.5,7.3" fill="none" stroke="#efefef" stroke-width="2.9" stroke-linecap="round"/><path d="M33.5,-12.9 A16.6,16.6 0 0 1 33.5,12.7" fill="none" stroke="#efefef" stroke-width="2.9" stroke-linecap="round"/></g><rect x="984.0" y="840.4" width="88.0" height="40.6" rx="6" fill="#17191d"/><rect x="984.0" y="838.8" width="88.0" height="40.6" rx="6" fill="#fe8f78"/><text x="1028.0" y="868.6" text-anchor="middle" font-size="26.5" fill="#fbfbfb">0°</text><rect x="984.0" y="889.3" width="88.0" height="40.6" rx="6" fill="#17191d"/><rect x="984.0" y="887.7" width="88.0" height="40.6" rx="6" fill="#545968"/><text x="1028.0" y="917.2" text-anchor="middle" font-size="26.5" fill="#fbfbfb">link</text><text x="897.1" y="991.2" font-size="23.6" fill="#fbfbfb">Delay</text><text x="990.7" y="992.2" font-size="21.6" fill="#fbfbfb">0.000 ms</text>
<path d="M878,1033.7 V643.1 H1100 V1033.7" fill="none" stroke="#00c8cc" stroke-width="2.2"/>
<rect x="878" y="1027.9" width="222" height="2.3" fill="#00c8cc"/>
<rect x="1106.5" y="643.5" width="216.4" height="389.0" rx="4" fill="#0f1012"/><rect x="1104.9" y="642.3" width="218.4" height="389.0" rx="4.5" fill="#33363f"/><path d="M1106.9,681.9 V646.3 Q1106.9,642.3 1110.9,642.3 H1319.3 Q1323.3,642.3 1323.3,646.3 V681.9 Z" fill="#484d5a"/><text transform="translate(1214.9,672.4) scale(.961,1)" text-anchor="middle" font-size="29.5" fill="#fbfbfb">CH2</text><rect x="1110.9" y="692.3" width="208.4" height="39.8" rx="6" fill="#8430d6"/><text transform="translate(1201.1,718.9) scale(.972,1)" text-anchor="middle" font-size="27.2" fill="#fbfbfb">FR-Tweeter</text><path d="M1300.7,708.1 h14.6 l-7.3,10.3 Z" fill="#fff"/><path d="M1177.9,769.3 H1188.9 L1178.3,914.9 H1177.5 Z" fill="url(#wg)"/><path d="M1177.9,769.3 H1188.9 L1178.3,914.9 H1177.5 Z" fill="url(#wg2)"/><rect x="1170.2" y="767.7" width="5" height="148.4" fill="#18191b"/><rect x="1171.9" y="767.7" width="1.6" height="148.4" fill="#2c2d2f"/><rect x="1152.4" y="767.4" width="14.7" height="2.4" fill="#c2c2c2"/><rect x="1159.3" y="779.6" width="7.2" height="2.4" fill="#c2c2c2"/><rect x="1159.3" y="791.9" width="7.2" height="2.4" fill="#c2c2c2"/><rect x="1159.3" y="804.1" width="7.2" height="2.4" fill="#c2c2c2"/><rect x="1152.4" y="816.3" width="14.7" height="2.4" fill="#c2c2c2"/><rect x="1159.3" y="828.5" width="7.2" height="2.4" fill="#c2c2c2"/><rect x="1159.3" y="840.8" width="7.2" height="2.4" fill="#c2c2c2"/><rect x="1159.3" y="853.0" width="7.2" height="2.4" fill="#c2c2c2"/><rect x="1152.4" y="865.2" width="14.7" height="2.4" fill="#c2c2c2"/><rect x="1159.3" y="877.5" width="7.2" height="2.4" fill="#c2c2c2"/><rect x="1159.3" y="889.7" width="7.2" height="2.4" fill="#c2c2c2"/><rect x="1159.3" y="901.9" width="7.2" height="2.4" fill="#c2c2c2"/><rect x="1152.4" y="914.2" width="14.7" height="2.4" fill="#c2c2c2"/><text x="1149.5" y="775.3" text-anchor="end" font-size="17.5" fill="#c2c2c2" textLength="7.8" lengthAdjust="spacingAndGlyphs">0</text><text x="1149.5" y="824.2" text-anchor="end" font-size="17.5" fill="#c2c2c2" textLength="25.4" lengthAdjust="spacingAndGlyphs">−20</text><text x="1149.5" y="873.1" text-anchor="end" font-size="17.5" fill="#c2c2c2" textLength="26.0" lengthAdjust="spacingAndGlyphs">−40</text><text x="1149.5" y="922.1" text-anchor="end" font-size="17.5" fill="#c2c2c2" textLength="25.4" lengthAdjust="spacingAndGlyphs">OFF</text><rect x="1155.1" y="753.3" width="26" height="46.4" rx="1.5" fill="#121316" opacity=".8" filter="url(#b1)"/><rect x="1156.5" y="754.1" width="22.6" height="44" rx="1" fill="url(#hg2)"/><rect x="1156.5" y="754.1" width="22.6" height="44" rx="1" fill="url(#rib)"/><text transform="translate(1249.3,772.9) scale(.955,1)" text-anchor="middle" font-size="27" fill="#fbfbfb">-4.0dB</text><rect x="1210.0" y="788.9" width="88.0" height="40.6" rx="6" fill="#17191d"/><rect x="1210.0" y="787.3" width="88.0" height="40.6" rx="6" fill="#484d5a"/><rect x="1213.6" y="787.3" width="80.8" height="1" fill="#5a6376" opacity=".8"/><g transform="translate(1233.2,807.9) scale(0.955,0.84)" fill="#efefef" stroke="none"><path d="M0,-8.4 H10.1 L21,-17 Q22.9,-18.3 22.9,-16 V16.2 Q22.9,18.5 21,17.2 L10.1,9 H0 Z"/><path d="M27.5,-7.3 A8.1,8.1 0 0 1 27.5,7.3" fill="none" stroke="#efefef" stroke-width="2.9" stroke-linecap="round"/><path d="M33.5,-12.9 A16.6,16.6 0 0 1 33.5,12.7" fill="none" stroke="#efefef" stroke-width="2.9" stroke-linecap="round"/></g><rect x="1210.0" y="836.7" width="88.0" height="40.6" rx="6" fill="#17191d"/><rect x="1210.0" y="835.1" width="88.0" height="40.6" rx="6" fill="#fe8f78"/><text x="1254.0" y="864.9" text-anchor="middle" font-size="26.5" fill="#fbfbfb">0°</text><rect x="1210.0" y="885.6" width="88.0" height="40.6" rx="6" fill="#17191d"/><rect x="1210.0" y="884.0" width="88.0" height="40.6" rx="6" fill="#545968"/><text x="1254.0" y="913.5" text-anchor="middle" font-size="26.5" fill="#fbfbfb">link</text><text x="1123.1" y="987.5" font-size="23.6" fill="#fbfbfb">Delay</text><text x="1216.7" y="988.5" font-size="21.6" fill="#fbfbfb">0.000 ms</text>
<rect x="1330.2" y="643.5" width="216.4" height="389.0" rx="4" fill="#0f1012"/><rect x="1328.6" y="642.3" width="218.4" height="389.0" rx="4.5" fill="#33363f"/><path d="M1330.6,681.9 V646.3 Q1330.6,642.3 1334.6,642.3 H1543.0 Q1547.0,642.3 1547.0,646.3 V681.9 Z" fill="#484d5a"/><text transform="translate(1438.6,672.4) scale(.961,1)" text-anchor="middle" font-size="29.5" fill="#fbfbfb">CH3</text><rect x="1334.6" y="692.3" width="208.4" height="39.8" rx="6" fill="#8430d6"/><text transform="translate(1424.8,718.9) scale(.972,1)" text-anchor="middle" font-size="27.2" fill="#fbfbfb">FL-Woofer</text><path d="M1524.4,708.1 h14.6 l-7.3,10.3 Z" fill="#fff"/><path d="M1401.6,769.3 H1412.6 L1402.0,914.9 H1401.2 Z" fill="url(#wg)"/><path d="M1401.6,769.3 H1412.6 L1402.0,914.9 H1401.2 Z" fill="url(#wg2)"/><rect x="1393.9" y="767.7" width="5" height="148.4" fill="#18191b"/><rect x="1395.6" y="767.7" width="1.6" height="148.4" fill="#2c2d2f"/><rect x="1376.1" y="767.4" width="14.7" height="2.4" fill="#c2c2c2"/><rect x="1383.0" y="779.6" width="7.2" height="2.4" fill="#c2c2c2"/><rect x="1383.0" y="791.9" width="7.2" height="2.4" fill="#c2c2c2"/><rect x="1383.0" y="804.1" width="7.2" height="2.4" fill="#c2c2c2"/><rect x="1376.1" y="816.3" width="14.7" height="2.4" fill="#c2c2c2"/><rect x="1383.0" y="828.5" width="7.2" height="2.4" fill="#c2c2c2"/><rect x="1383.0" y="840.8" width="7.2" height="2.4" fill="#c2c2c2"/><rect x="1383.0" y="853.0" width="7.2" height="2.4" fill="#c2c2c2"/><rect x="1376.1" y="865.2" width="14.7" height="2.4" fill="#c2c2c2"/><rect x="1383.0" y="877.5" width="7.2" height="2.4" fill="#c2c2c2"/><rect x="1383.0" y="889.7" width="7.2" height="2.4" fill="#c2c2c2"/><rect x="1383.0" y="901.9" width="7.2" height="2.4" fill="#c2c2c2"/><rect x="1376.1" y="914.2" width="14.7" height="2.4" fill="#c2c2c2"/><text x="1373.2" y="775.3" text-anchor="end" font-size="17.5" fill="#c2c2c2" textLength="7.8" lengthAdjust="spacingAndGlyphs">0</text><text x="1373.2" y="824.2" text-anchor="end" font-size="17.5" fill="#c2c2c2" textLength="25.4" lengthAdjust="spacingAndGlyphs">−20</text><text x="1373.2" y="873.1" text-anchor="end" font-size="17.5" fill="#c2c2c2" textLength="26.0" lengthAdjust="spacingAndGlyphs">−40</text><text x="1373.2" y="922.1" text-anchor="end" font-size="17.5" fill="#c2c2c2" textLength="25.4" lengthAdjust="spacingAndGlyphs">OFF</text><rect x="1378.8" y="742.9" width="26" height="46.4" rx="1.5" fill="#121316" opacity=".8" filter="url(#b1)"/><rect x="1380.2" y="743.7" width="22.6" height="44" rx="1" fill="url(#hg2)"/><rect x="1380.2" y="743.7" width="22.6" height="44" rx="1" fill="url(#rib)"/><text transform="translate(1473.0,772.9) scale(.955,1)" text-anchor="middle" font-size="27" fill="#fbfbfb">0.0dB</text><rect x="1433.7" y="788.9" width="88.0" height="40.6" rx="6" fill="#17191d"/><rect x="1433.7" y="787.3" width="88.0" height="40.6" rx="6" fill="#484d5a"/><rect x="1437.3" y="787.3" width="80.8" height="1" fill="#5a6376" opacity=".8"/><g transform="translate(1456.9,807.9) scale(0.955,0.84)" fill="#efefef" stroke="none"><path d="M0,-8.4 H10.1 L21,-17 Q22.9,-18.3 22.9,-16 V16.2 Q22.9,18.5 21,17.2 L10.1,9 H0 Z"/><path d="M27.5,-7.3 A8.1,8.1 0 0 1 27.5,7.3" fill="none" stroke="#efefef" stroke-width="2.9" stroke-linecap="round"/><path d="M33.5,-12.9 A16.6,16.6 0 0 1 33.5,12.7" fill="none" stroke="#efefef" stroke-width="2.9" stroke-linecap="round"/></g><rect x="1433.7" y="836.7" width="88.0" height="40.6" rx="6" fill="#17191d"/><rect x="1433.7" y="835.1" width="88.0" height="40.6" rx="6" fill="#fe8f78"/><text x="1477.7" y="864.9" text-anchor="middle" font-size="26.5" fill="#fbfbfb">0°</text><rect x="1433.7" y="885.6" width="88.0" height="40.6" rx="6" fill="#17191d"/><rect x="1433.7" y="884.0" width="88.0" height="40.6" rx="6" fill="#545968"/><text x="1477.7" y="913.5" text-anchor="middle" font-size="26.5" fill="#fbfbfb">link</text><text x="1346.8" y="987.5" font-size="23.6" fill="#fbfbfb">Delay</text><text x="1440.4" y="988.5" font-size="21.6" fill="#fbfbfb">0.000 ms</text>
<rect x="1554.0" y="643.5" width="216.4" height="389.0" rx="4" fill="#0f1012"/><rect x="1552.4" y="642.3" width="218.4" height="389.0" rx="4.5" fill="#33363f"/><path d="M1554.4,681.9 V646.3 Q1554.4,642.3 1558.4,642.3 H1766.8 Q1770.8,642.3 1770.8,646.3 V681.9 Z" fill="#484d5a"/><text transform="translate(1662.4,672.4) scale(.961,1)" text-anchor="middle" font-size="29.5" fill="#fbfbfb">CH4</text><rect x="1558.4" y="692.3" width="208.4" height="39.8" rx="6" fill="#8430d6"/><text transform="translate(1648.6,718.9) scale(.972,1)" text-anchor="middle" font-size="27.2" fill="#fbfbfb">FR-Woofer</text><path d="M1748.2,708.1 h14.6 l-7.3,10.3 Z" fill="#fff"/><path d="M1625.4,769.3 H1636.4 L1625.8,914.9 H1625.0 Z" fill="url(#wg)"/><path d="M1625.4,769.3 H1636.4 L1625.8,914.9 H1625.0 Z" fill="url(#wg2)"/><rect x="1617.7" y="767.7" width="5" height="148.4" fill="#18191b"/><rect x="1619.4" y="767.7" width="1.6" height="148.4" fill="#2c2d2f"/><rect x="1599.9" y="767.4" width="14.7" height="2.4" fill="#c2c2c2"/><rect x="1606.8" y="779.6" width="7.2" height="2.4" fill="#c2c2c2"/><rect x="1606.8" y="791.9" width="7.2" height="2.4" fill="#c2c2c2"/><rect x="1606.8" y="804.1" width="7.2" height="2.4" fill="#c2c2c2"/><rect x="1599.9" y="816.3" width="14.7" height="2.4" fill="#c2c2c2"/><rect x="1606.8" y="828.5" width="7.2" height="2.4" fill="#c2c2c2"/><rect x="1606.8" y="840.8" width="7.2" height="2.4" fill="#c2c2c2"/><rect x="1606.8" y="853.0" width="7.2" height="2.4" fill="#c2c2c2"/><rect x="1599.9" y="865.2" width="14.7" height="2.4" fill="#c2c2c2"/><rect x="1606.8" y="877.5" width="7.2" height="2.4" fill="#c2c2c2"/><rect x="1606.8" y="889.7" width="7.2" height="2.4" fill="#c2c2c2"/><rect x="1606.8" y="901.9" width="7.2" height="2.4" fill="#c2c2c2"/><rect x="1599.9" y="914.2" width="14.7" height="2.4" fill="#c2c2c2"/><text x="1597.0" y="775.3" text-anchor="end" font-size="17.5" fill="#c2c2c2" textLength="7.8" lengthAdjust="spacingAndGlyphs">0</text><text x="1597.0" y="824.2" text-anchor="end" font-size="17.5" fill="#c2c2c2" textLength="25.4" lengthAdjust="spacingAndGlyphs">−20</text><text x="1597.0" y="873.1" text-anchor="end" font-size="17.5" fill="#c2c2c2" textLength="26.0" lengthAdjust="spacingAndGlyphs">−40</text><text x="1597.0" y="922.1" text-anchor="end" font-size="17.5" fill="#c2c2c2" textLength="25.4" lengthAdjust="spacingAndGlyphs">OFF</text><rect x="1602.6" y="747.3" width="26" height="46.4" rx="1.5" fill="#121316" opacity=".8" filter="url(#b1)"/><rect x="1604.0" y="748.1" width="22.6" height="44" rx="1" fill="url(#hg2)"/><rect x="1604.0" y="748.1" width="22.6" height="44" rx="1" fill="url(#rib)"/><text transform="translate(1696.8,772.9) scale(.955,1)" text-anchor="middle" font-size="27" fill="#fbfbfb">-1.5dB</text><rect x="1657.5" y="788.9" width="88.0" height="40.6" rx="6" fill="#17191d"/><rect x="1657.5" y="787.3" width="88.0" height="40.6" rx="6" fill="#484d5a"/><rect x="1661.1" y="787.3" width="80.8" height="1" fill="#5a6376" opacity=".8"/><g transform="translate(1680.7,807.9) scale(0.955,0.84)" fill="#efefef" stroke="none"><path d="M0,-8.4 H10.1 L21,-17 Q22.9,-18.3 22.9,-16 V16.2 Q22.9,18.5 21,17.2 L10.1,9 H0 Z"/><path d="M27.5,-7.3 A8.1,8.1 0 0 1 27.5,7.3" fill="none" stroke="#efefef" stroke-width="2.9" stroke-linecap="round"/><path d="M33.5,-12.9 A16.6,16.6 0 0 1 33.5,12.7" fill="none" stroke="#efefef" stroke-width="2.9" stroke-linecap="round"/></g><rect x="1657.5" y="836.7" width="88.0" height="40.6" rx="6" fill="#17191d"/><rect x="1657.5" y="835.1" width="88.0" height="40.6" rx="6" fill="#fe8f78"/><text x="1701.5" y="864.9" text-anchor="middle" font-size="26.5" fill="#fbfbfb">0°</text><rect x="1657.5" y="885.6" width="88.0" height="40.6" rx="6" fill="#17191d"/><rect x="1657.5" y="884.0" width="88.0" height="40.6" rx="6" fill="#545968"/><text x="1701.5" y="913.5" text-anchor="middle" font-size="26.5" fill="#fbfbfb">link</text><text x="1570.6" y="987.5" font-size="23.6" fill="#fbfbfb">Delay</text><text x="1664.2" y="988.5" font-size="21.6" fill="#fbfbfb">0.000 ms</text>
<rect x="1777.7" y="643.5" width="216.4" height="389.0" rx="4" fill="#0f1012"/><rect x="1776.1" y="642.3" width="218.4" height="389.0" rx="4.5" fill="#33363f"/><path d="M1778.1,681.9 V646.3 Q1778.1,642.3 1782.1,642.3 H1990.5 Q1994.5,642.3 1994.5,646.3 V681.9 Z" fill="#484d5a"/><text transform="translate(1886.1,672.4) scale(.961,1)" text-anchor="middle" font-size="29.5" fill="#fbfbfb">CH5</text><rect x="1782.1" y="692.3" width="208.4" height="39.8" rx="6" fill="#8430d6"/><text transform="translate(1872.3,718.9) scale(.972,1)" text-anchor="middle" font-size="27.2" fill="#fbfbfb">L-Subwoofer</text><path d="M1971.9,708.1 h14.6 l-7.3,10.3 Z" fill="#fff"/><path d="M1849.1,769.3 H1860.1 L1849.5,914.9 H1848.7 Z" fill="url(#wg)"/><path d="M1849.1,769.3 H1860.1 L1849.5,914.9 H1848.7 Z" fill="url(#wg2)"/><rect x="1841.4" y="767.7" width="5" height="148.4" fill="#18191b"/><rect x="1843.1" y="767.7" width="1.6" height="148.4" fill="#2c2d2f"/><rect x="1823.6" y="767.4" width="14.7" height="2.4" fill="#c2c2c2"/><rect x="1830.5" y="779.6" width="7.2" height="2.4" fill="#c2c2c2"/><rect x="1830.5" y="791.9" width="7.2" height="2.4" fill="#c2c2c2"/><rect x="1830.5" y="804.1" width="7.2" height="2.4" fill="#c2c2c2"/><rect x="1823.6" y="816.3" width="14.7" height="2.4" fill="#c2c2c2"/><rect x="1830.5" y="828.5" width="7.2" height="2.4" fill="#c2c2c2"/><rect x="1830.5" y="840.8" width="7.2" height="2.4" fill="#c2c2c2"/><rect x="1830.5" y="853.0" width="7.2" height="2.4" fill="#c2c2c2"/><rect x="1823.6" y="865.2" width="14.7" height="2.4" fill="#c2c2c2"/><rect x="1830.5" y="877.5" width="7.2" height="2.4" fill="#c2c2c2"/><rect x="1830.5" y="889.7" width="7.2" height="2.4" fill="#c2c2c2"/><rect x="1830.5" y="901.9" width="7.2" height="2.4" fill="#c2c2c2"/><rect x="1823.6" y="914.2" width="14.7" height="2.4" fill="#c2c2c2"/><text x="1820.7" y="775.3" text-anchor="end" font-size="17.5" fill="#c2c2c2" textLength="7.8" lengthAdjust="spacingAndGlyphs">0</text><text x="1820.7" y="824.2" text-anchor="end" font-size="17.5" fill="#c2c2c2" textLength="25.4" lengthAdjust="spacingAndGlyphs">−20</text><text x="1820.7" y="873.1" text-anchor="end" font-size="17.5" fill="#c2c2c2" textLength="26.0" lengthAdjust="spacingAndGlyphs">−40</text><text x="1820.7" y="922.1" text-anchor="end" font-size="17.5" fill="#c2c2c2" textLength="25.4" lengthAdjust="spacingAndGlyphs">OFF</text><rect x="1826.3" y="779.3" width="26" height="46.4" rx="1.5" fill="#121316" opacity=".8" filter="url(#b1)"/><rect x="1827.7" y="780.1" width="22.6" height="44" rx="1" fill="url(#hg2)"/><rect x="1827.7" y="780.1" width="22.6" height="44" rx="1" fill="url(#rib)"/><text transform="translate(1920.5,772.9) scale(.955,1)" text-anchor="middle" font-size="27" fill="#fbfbfb">-14.0dB</text><rect x="1881.2" y="788.9" width="88.0" height="40.6" rx="6" fill="#17191d"/><rect x="1881.2" y="787.3" width="88.0" height="40.6" rx="6" fill="#484d5a"/><rect x="1884.8" y="787.3" width="80.8" height="1" fill="#5a6376" opacity=".8"/><g transform="translate(1904.4,807.9) scale(0.955,0.84)" fill="#efefef" stroke="none"><path d="M0,-8.4 H10.1 L21,-17 Q22.9,-18.3 22.9,-16 V16.2 Q22.9,18.5 21,17.2 L10.1,9 H0 Z"/><path d="M27.5,-7.3 A8.1,8.1 0 0 1 27.5,7.3" fill="none" stroke="#efefef" stroke-width="2.9" stroke-linecap="round"/><path d="M33.5,-12.9 A16.6,16.6 0 0 1 33.5,12.7" fill="none" stroke="#efefef" stroke-width="2.9" stroke-linecap="round"/></g><rect x="1881.2" y="836.7" width="88.0" height="40.6" rx="6" fill="#17191d"/><rect x="1881.2" y="835.1" width="88.0" height="40.6" rx="6" fill="#fe8f78"/><text x="1925.2" y="864.9" text-anchor="middle" font-size="26.5" fill="#fbfbfb">0°</text><rect x="1881.2" y="885.6" width="88.0" height="40.6" rx="6" fill="#17191d"/><rect x="1881.2" y="884.0" width="88.0" height="40.6" rx="6" fill="#0a84d6"/><text x="1925.2" y="913.5" text-anchor="middle" font-size="26.5" fill="#fbfbfb">link</text><text x="1794.3" y="987.5" font-size="23.6" fill="#fbfbfb">Delay</text><text x="1887.9" y="988.5" font-size="21.6" fill="#fbfbfb">0.000 ms</text>
<rect x="2000.7" y="643.5" width="216.4" height="389.0" rx="4" fill="#0f1012"/><rect x="1999.1" y="642.3" width="218.4" height="389.0" rx="4.5" fill="#33363f"/><path d="M2001.1,681.9 V646.3 Q2001.1,642.3 2005.1,642.3 H2213.5 Q2217.5,642.3 2217.5,646.3 V681.9 Z" fill="#484d5a"/><text transform="translate(2109.1,672.4) scale(.961,1)" text-anchor="middle" font-size="29.5" fill="#fbfbfb">CH6</text><rect x="2005.1" y="692.3" width="208.4" height="39.8" rx="6" fill="#8430d6"/><text transform="translate(2095.3,718.9) scale(.972,1)" text-anchor="middle" font-size="27.2" fill="#fbfbfb"></text><path d="M2194.9,708.1 h14.6 l-7.3,10.3 Z" fill="#fff"/><path d="M2072.1,769.3 H2083.1 L2072.5,914.9 H2071.7 Z" fill="url(#wg)"/><path d="M2072.1,769.3 H2083.1 L2072.5,914.9 H2071.7 Z" fill="url(#wg2)"/><rect x="2064.4" y="767.7" width="5" height="148.4" fill="#18191b"/><rect x="2066.1" y="767.7" width="1.6" height="148.4" fill="#2c2d2f"/><rect x="2046.6" y="767.4" width="14.7" height="2.4" fill="#c2c2c2"/><rect x="2053.5" y="779.6" width="7.2" height="2.4" fill="#c2c2c2"/><rect x="2053.5" y="791.9" width="7.2" height="2.4" fill="#c2c2c2"/><rect x="2053.5" y="804.1" width="7.2" height="2.4" fill="#c2c2c2"/><rect x="2046.6" y="816.3" width="14.7" height="2.4" fill="#c2c2c2"/><rect x="2053.5" y="828.5" width="7.2" height="2.4" fill="#c2c2c2"/><rect x="2053.5" y="840.8" width="7.2" height="2.4" fill="#c2c2c2"/><rect x="2053.5" y="853.0" width="7.2" height="2.4" fill="#c2c2c2"/><rect x="2046.6" y="865.2" width="14.7" height="2.4" fill="#c2c2c2"/><rect x="2053.5" y="877.5" width="7.2" height="2.4" fill="#c2c2c2"/><rect x="2053.5" y="889.7" width="7.2" height="2.4" fill="#c2c2c2"/><rect x="2053.5" y="901.9" width="7.2" height="2.4" fill="#c2c2c2"/><rect x="2046.6" y="914.2" width="14.7" height="2.4" fill="#c2c2c2"/><text x="2043.7" y="775.3" text-anchor="end" font-size="17.5" fill="#c2c2c2" textLength="7.8" lengthAdjust="spacingAndGlyphs">0</text><text x="2043.7" y="824.2" text-anchor="end" font-size="17.5" fill="#c2c2c2" textLength="25.4" lengthAdjust="spacingAndGlyphs">−20</text><text x="2043.7" y="873.1" text-anchor="end" font-size="17.5" fill="#c2c2c2" textLength="26.0" lengthAdjust="spacingAndGlyphs">−40</text><text x="2043.7" y="922.1" text-anchor="end" font-size="17.5" fill="#c2c2c2" textLength="25.4" lengthAdjust="spacingAndGlyphs">OFF</text><rect x="2049.3" y="751.5" width="26" height="46.4" rx="1.5" fill="#121316" opacity=".8" filter="url(#b1)"/><rect x="2050.7" y="752.3" width="22.6" height="44" rx="1" fill="url(#hg2)"/><rect x="2050.7" y="752.3" width="22.6" height="44" rx="1" fill="url(#rib)"/><text transform="translate(2143.5,772.9) scale(.955,1)" text-anchor="middle" font-size="27" fill="#fbfbfb"></text><rect x="2104.2" y="788.9" width="88.0" height="40.6" rx="6" fill="#17191d"/><rect x="2104.2" y="787.3" width="88.0" height="40.6" rx="6" fill="#484d5a"/><rect x="2107.8" y="787.3" width="80.8" height="1" fill="#5a6376" opacity=".8"/><g transform="translate(2127.4,807.9) scale(0.955,0.84)" fill="#efefef" stroke="none"><path d="M0,-8.4 H10.1 L21,-17 Q22.9,-18.3 22.9,-16 V16.2 Q22.9,18.5 21,17.2 L10.1,9 H0 Z"/><path d="M27.5,-7.3 A8.1,8.1 0 0 1 27.5,7.3" fill="none" stroke="#efefef" stroke-width="2.9" stroke-linecap="round"/><path d="M33.5,-12.9 A16.6,16.6 0 0 1 33.5,12.7" fill="none" stroke="#efefef" stroke-width="2.9" stroke-linecap="round"/></g><rect x="2104.2" y="836.7" width="88.0" height="40.6" rx="6" fill="#17191d"/><rect x="2104.2" y="835.1" width="88.0" height="40.6" rx="6" fill="#fe8f78"/><text x="2148.2" y="864.9" text-anchor="middle" font-size="26.5" fill="#fbfbfb">0°</text><rect x="2104.2" y="885.6" width="88.0" height="40.6" rx="6" fill="#17191d"/><rect x="2104.2" y="884.0" width="88.0" height="40.6" rx="6" fill="#545968"/><text x="2148.2" y="913.5" text-anchor="middle" font-size="26.5" fill="#fbfbfb">link</text><text x="2017.3" y="987.5" font-size="23.6" fill="#fbfbfb">Delay</text><text x="2110.9" y="988.5" font-size="21.6" fill="#fbfbfb">0.000 ms</text>
</svg></div>
</body></html>
